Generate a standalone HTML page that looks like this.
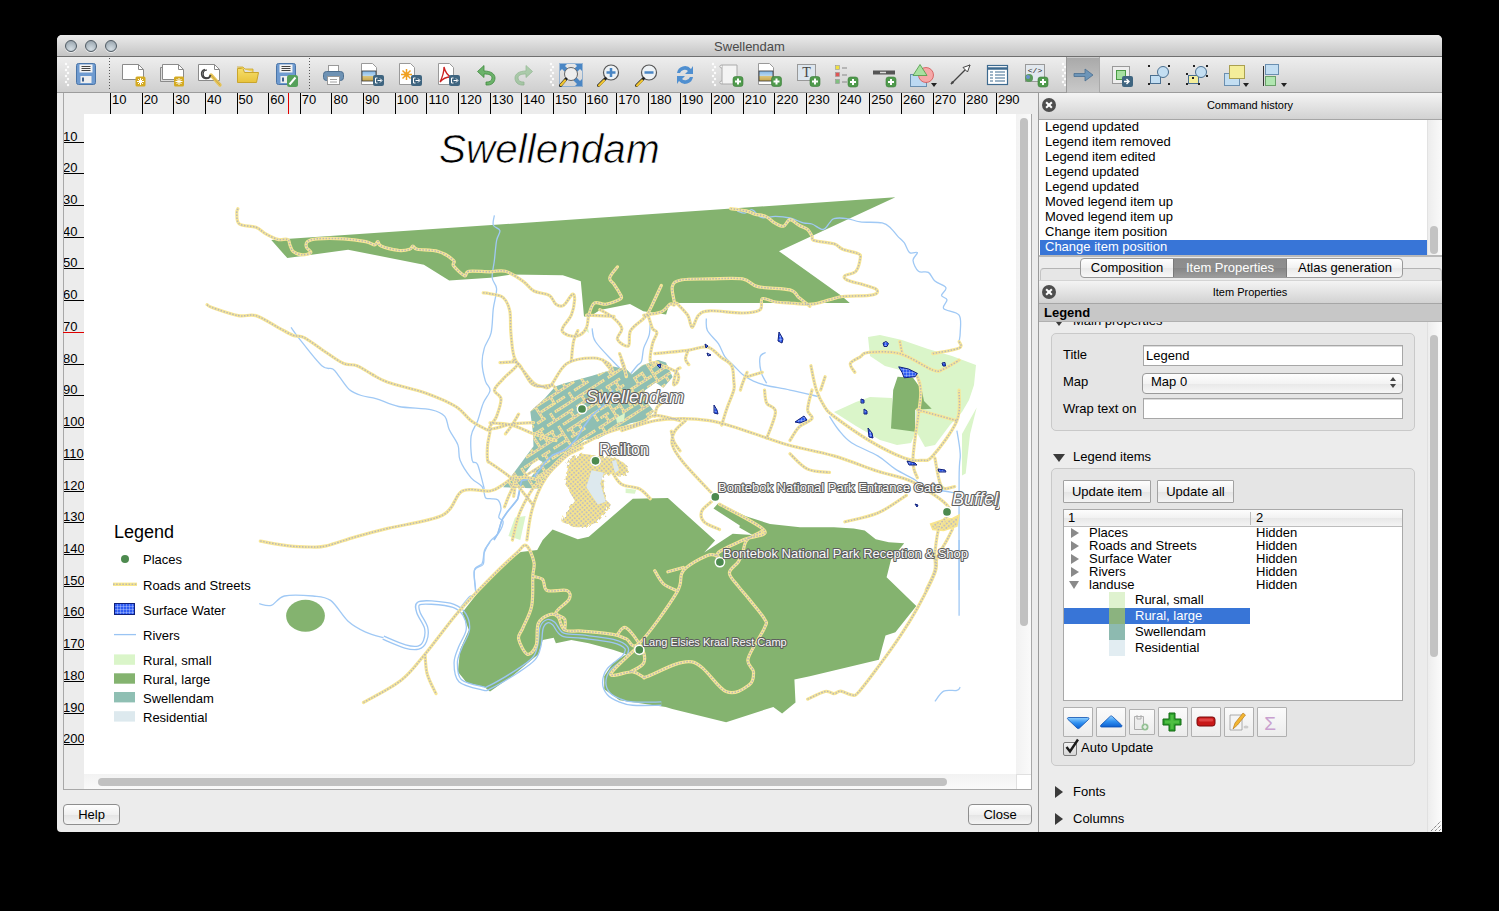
<!DOCTYPE html>
<html><head><meta charset="utf-8">
<style>
*{margin:0;padding:0;box-sizing:border-box}
html,body{width:1499px;height:911px;overflow:hidden;background:#000;font-family:"Liberation Sans",sans-serif;}
.a{position:absolute}
#win{position:absolute;left:57px;top:35px;width:1385px;height:797px;background:#ececec;border-radius:5px 5px 4px 4px;overflow:hidden}
#title{left:0;top:0;width:1385px;height:22px;background:linear-gradient(#ebebeb,#c4c4c4);border-bottom:1px solid #6f6f6f}
#title .t{left:0;width:1385px;top:4px;text-align:center;font-size:13px;color:#4a4a4a}
.light{width:12px;height:12px;border-radius:50%;top:5px;background:radial-gradient(circle at 50% 80%,#d4dde3 0,#b3bec6 50%,#8f9ba4 100%);border:1px solid #4f5a63;box-shadow:0 1px 0 rgba(255,255,255,.6)}
#tb{left:0;top:22px;width:1385px;height:36px;background:linear-gradient(#eeeeee,#cfcfcf);border-bottom:1px solid #9c9c9c}
.ic{position:absolute;width:26px;height:26px}
.sep{position:absolute;top:7px;width:1px;height:28px;border-left:1px dotted #8a8a8a}
.grip{position:absolute;top:10px;width:5px;height:22px;background:repeating-linear-gradient(#fff 0 2px,transparent 2px 4px);opacity:.8}
#rulT{left:6px;top:58px;width:968px;height:21px;background:#ececec;overflow:hidden}
#rulL{left:6px;top:79px;width:21px;height:676px;background:#ececec;overflow:hidden}
.rt{position:absolute;top:0;height:21px;border-left:1px solid #000;font-size:13px;line-height:14px;padding-left:1px;color:#000}
.rl{position:absolute;left:0;width:21px;border-bottom:1px solid #000;font-size:13px;line-height:17px;height:15px;color:#000;white-space:nowrap;overflow:visible}
#canvas{left:27px;top:79px;width:932px;height:660px;background:#fff;overflow:hidden}
.txt{position:absolute;white-space:nowrap}
#dock{left:982px;top:58px;width:403px;height:739px;background:#ececec}
.dh{position:absolute;left:0;width:403px;background:linear-gradient(#f4f4f4,#d2d2d2);border-bottom:1px solid #a6a6a6;font-size:11px;text-align:center;color:#000}
.xbtn{position:absolute;left:3px;width:14px;height:14px;border-radius:50%;background:#4e4e4e}
.xbtn:before,.xbtn:after{content:"";position:absolute;left:6px;top:3px;width:2px;height:8px;background:#fff;transform:rotate(45deg)}
.xbtn:after{transform:rotate(-45deg)}
.li{position:absolute;left:6px;font-size:13px;line-height:13px;height:15px;white-space:nowrap}
.btn{position:absolute;background:linear-gradient(#fefefe,#f0f0f0 50%,#e4e4e4 51%,#f4f4f4);border:1px solid #8e8e8e;border-radius:4px;font-size:13px;text-align:center}
</style></head><body>
<div id="win">
  <div id="title" class="a">
    <div class="a light" style="left:8px"></div>
    <div class="a light" style="left:28px"></div>
    <div class="a light" style="left:48px"></div>
    <div class="a t">Swellendam</div>
  </div>
  <div id="tb" class="a">
  </div>
  <!-- rulers -->
  <div id="rulT" class="a"><div class="rt" style="left:47.00px">10</div><div class="rt" style="left:78.64px">20</div><div class="rt" style="left:110.28px">30</div><div class="rt" style="left:141.92px">40</div><div class="rt" style="left:173.56px">50</div><div class="rt" style="left:205.20px">60</div><div class="rt" style="left:236.84px">70</div><div class="rt" style="left:268.48px">80</div><div class="rt" style="left:300.12px">90</div><div class="rt" style="left:331.76px">100</div><div class="rt" style="left:363.40px">110</div><div class="rt" style="left:395.04px">120</div><div class="rt" style="left:426.68px">130</div><div class="rt" style="left:458.32px">140</div><div class="rt" style="left:489.96px">150</div><div class="rt" style="left:521.60px">160</div><div class="rt" style="left:553.24px">170</div><div class="rt" style="left:584.88px">180</div><div class="rt" style="left:616.52px">190</div><div class="rt" style="left:648.16px">200</div><div class="rt" style="left:679.80px">210</div><div class="rt" style="left:711.44px">220</div><div class="rt" style="left:743.08px">230</div><div class="rt" style="left:774.72px">240</div><div class="rt" style="left:806.36px">250</div><div class="rt" style="left:838.00px">260</div><div class="rt" style="left:869.64px">270</div><div class="rt" style="left:901.28px">280</div><div class="rt" style="left:932.92px">290</div><div class="a" style="left:225px;top:0;width:1px;height:21px;background:#e00000"></div></div>
  <div id="rulL" class="a"><div class="a" style="left:0;top:218px;width:21px;height:1px;background:#e00000;z-index:2"></div><div class="rl" style="top:13.60px">10</div><div class="rl" style="top:45.32px">20</div><div class="rl" style="top:77.04px">30</div><div class="rl" style="top:108.76px">40</div><div class="rl" style="top:140.48px">50</div><div class="rl" style="top:172.20px">60</div><div class="rl" style="top:203.92px">70</div><div class="rl" style="top:235.64px">80</div><div class="rl" style="top:267.36px">90</div><div class="rl" style="top:299.08px">100</div><div class="rl" style="top:330.80px">110</div><div class="rl" style="top:362.52px">120</div><div class="rl" style="top:394.24px">130</div><div class="rl" style="top:425.96px">140</div><div class="rl" style="top:457.68px">150</div><div class="rl" style="top:489.40px">160</div><div class="rl" style="top:521.12px">170</div><div class="rl" style="top:552.84px">180</div><div class="rl" style="top:584.56px">190</div><div class="rl" style="top:616.28px">200</div></div>
  <div class="a" style="left:6px;top:58px;width:1px;height:697px;background:#a8a8a8"></div>
  <div class="a" style="left:6px;top:754px;width:968px;height:1px;background:#a8a8a8"></div><div class="a" style="left:974px;top:79px;width:1px;height:676px;background:#a8a8a8"></div><div class="a" style="left:959px;top:739px;width:15px;height:15px;background:#fff;border-left:1px solid #e0e0e0;border-top:1px solid #e0e0e0"></div>
  <div id="canvas" class="a"></div>
  <!-- scrollbars -->
  <div class="a" style="left:959px;top:79px;width:15px;height:660px;background:linear-gradient(90deg,#f2f2f2,#fafafa)"></div>
  <div class="a" style="left:963px;top:83px;width:8px;height:508px;border-radius:4px;background:#c1c1c1"></div>
  <div class="a" style="left:27px;top:739px;width:932px;height:15px;background:linear-gradient(#f2f2f2,#fafafa)"></div>
  <div class="a" style="left:41px;top:743px;width:849px;height:8px;border-radius:4px;background:#c1c1c1"></div>
  <div class="btn" style="left:6px;top:769px;width:57px;height:21px;line-height:19px">Help</div>
  <div class="btn" style="left:911px;top:769px;width:64px;height:21px;line-height:19px">Close</div>
  <!-- dock -->
  <div class="a" style="left:981px;top:58px;width:1px;height:739px;background:#9a9a9a"></div>
  <div id="dock" class="a">
  </div>
</div>

<!--MAP-->
<svg class="a" style="left:84px;top:114px" width="932" height="660" viewBox="84 114 932 660">
<defs>
<pattern id="townpat" width="7" height="7" patternUnits="userSpaceOnUse" patternTransform="rotate(-38)">
<path d="M0 2h7M2 0v7" stroke="#f5e494" stroke-width="2.8"/>
<path d="M0 2h7M2 0v7" stroke="#bdb8ad" stroke-width="1" stroke-dasharray="1 1.6"/>
</pattern>
<pattern id="railpat" width="3.2" height="3.2" patternUnits="userSpaceOnUse" patternTransform="rotate(-40)">
<rect width="3.2" height="3.2" fill="#f9e68c"/>
<rect x="0.6" y="0.6" width="1.9" height="1.9" fill="#c0bfbf"/>
</pattern>
<pattern id="wpat" width="3" height="3" patternUnits="userSpaceOnUse"><rect width="3" height="3" fill="#2f5cf2"/><path d="M0 0h3M0 0v3" stroke="#d8e4ff" stroke-width="0.7"/></pattern>
<filter id="rough" x="-10%" y="-10%" width="120%" height="120%"><feTurbulence type="fractalNoise" baseFrequency="0.25" numOctaves="2" seed="3"/><feDisplacementMap in="SourceGraphic" scale="6"/></filter>
<clipPath id="tealclip"><path d="M503.2 487.2 L533.5 446.3 L533.0 433.0 L530.3 411.4 L544.8 398.2 L555.3 386.4 L563.2 383.7 L592.2 375.8 L609.4 370.5 L613.3 366.6 L626.5 369.2 L631.8 374.5 L642.3 365.3 L658.1 360.0 L666.0 362.6 L672.6 377.1 L663.4 387.7 L655.5 382.4 L645.0 390.3 L645.0 399.5 L654.2 411.4 L643.6 420.6 L630.4 423.2 L612.0 431.2 L597.5 439.1 L584.8 439.8 L576.9 446.3 L563.8 456.9 L538.7 488.5 L525.0 488.0 Z"/></clipPath>
</defs>
<path d="M271.3 240.1 L620.0 216.3 L895.4 197.2 L779.0 251.2 L841.4 295.7 L849.8 302.9 L669.7 302.9 L666.1 314.4 L643.3 311.3 L630.0 304.0 L600.0 310.0 L590.0 316.6 L584.0 316.6 L580.8 281.3 L562.8 275.3 L510.3 274.6 L490.3 277.7 L449.2 280.5 L423.9 264.7 L348.1 249.7 L287.3 258.1 Z" fill="#84b36f"/>
<path d="M542.7 540.0 L552.6 529.5 L577.8 539.3 L588.8 536.7 L632.8 498.7 L667.9 498.1 L715.1 540.4 L704.2 552.5 L732.7 533.8 L752.5 534.9 L739.3 527.6 L739.8 525.6 L713.5 508.5 L718.4 503.1 L745.9 516.2 L770.0 524.0 L800.0 527.2 L833.9 527.3 L853.7 528.4 L864.7 530.6 L875.7 539.3 L888.8 542.2 L904.2 543.3 L891.0 559.8 L886.6 577.3 L916.3 605.9 L895.4 632.2 L885.5 635.5 L882.2 647.6 L878.9 659.7 L809.8 676.2 L794.4 679.5 L795.5 702.5 L790.0 706.9 L782.1 713.5 L773.3 706.9 L726.1 722.3 L672.3 709.1 L665.7 706.9 L619.6 700.3 L604.2 689.3 L604.2 676.2 L613.0 663.0 L626.2 654.2 L613.0 649.8 L588.8 643.2 L571.3 639.9 L555.9 643.2 L553.7 637.7 L542.7 639.9 L538.3 654.2 L512.0 676.2 L490.0 691.5 L484.3 687.1 L466.7 682.8 L457.9 671.8 L460.1 649.8 L468.9 630.0 L462.3 612.5 L490.0 577.3 L509.8 559.8 L520.7 552.1 L537.2 549.9 Z" fill="#84b36f"/>
<path d="M868.0 337.0 L880.0 335.0 L902.0 340.0 L928.0 349.0 L952.0 356.0 L976.0 365.0 L974.0 385.0 L969.0 400.0 L962.0 412.0 L950.0 425.0 L935.0 445.0 L925.0 447.0 L916.0 431.0 L916.0 410.0 L919.0 378.0 L904.0 371.0 L885.0 366.0 L870.0 356.0 Z" fill="#daf5c9"/>
<path d="M834.0 412.0 L856.0 402.0 L870.0 397.0 L892.0 398.0 L894.0 421.0 L916.0 431.0 L911.0 443.0 L897.0 445.0 L880.0 440.0 L868.0 433.0 L856.0 426.0 Z" fill="#daf5c9"/>
<path d="M976.7 407.6 L962.0 433.9 L962.0 475.6 L965.7 473.5 L970.1 433.9 Z" fill="#daf5c9"/>
<path d="M897.6 376.7 L913.0 377.8 L921.8 390.0 L924.0 401.0 L931.7 408.7 L915.2 409.8 L915.2 431.7 L891.0 428.4 L893.2 390.0 Z" fill="#84b36f"/>
<ellipse cx="305.5" cy="615.8" rx="19.4" ry="16" fill="#84b36f"/>
<path d="M291.0 327.3 C292.5 329.3 294.7 332.9 299.8 339.3 C304.9 345.7 316.3 360.8 321.8 365.7 C327.3 370.6 329.8 367.2 332.8 369.0 C335.7 370.8 336.6 373.3 339.3 376.7 C342.1 380.1 345.6 386.2 349.2 389.4 C352.9 392.5 356.7 393.9 361.3 395.5 C365.9 397.1 370.5 397.0 376.7 398.8 C382.9 400.6 389.5 404.6 398.6 406.5 C407.8 408.3 423.9 408.1 431.6 409.8 C439.3 411.4 441.8 413.1 444.8 416.4 C447.7 419.6 447.0 424.8 449.2 429.5 C451.3 434.3 456.1 439.8 457.9 444.9 C459.8 450.0 457.9 454.8 460.1 460.3 C462.3 465.8 467.5 473.5 471.1 477.8 C474.8 482.2 479.7 483.3 482.1 486.6 C484.5 489.9 484.1 495.6 485.4 497.6 C486.7 499.6 487.9 498.3 490.0 498.7 C492.1 499.1 495.9 498.2 497.7 499.8 C499.5 501.4 500.8 505.7 501.0 508.6 C501.2 511.5 498.4 515.2 498.8 517.4 C499.2 519.6 503.2 519.2 503.2 521.8 C503.2 524.4 501.0 529.5 498.8 532.8 C496.6 536.1 492.4 538.2 490.0 541.5 C487.6 544.8 485.6 548.9 484.3 552.5 C483.0 556.2 483.7 560.6 482.1 563.5 C480.4 566.4 475.5 565.7 474.4 570.1 C473.3 574.5 475.3 586.7 475.5 590.1" fill="none" stroke="#a0c9f5" stroke-width="1.3" stroke-linejoin="round"/>
<path d="M494.4 215.3 C494.2 216.9 492.4 222.6 493.3 225.1 C494.2 227.7 499.3 228.1 499.9 230.6 C500.4 233.2 497.5 235.6 496.6 240.5 C495.7 245.5 495.1 254.1 494.4 260.3 C493.7 266.5 491.8 273.1 492.2 277.8 C492.6 282.6 496.4 283.7 496.6 288.8 C496.8 294.0 494.2 301.3 493.3 308.6 C492.4 315.9 492.6 326.2 491.1 332.8 C489.6 339.3 485.8 343.0 484.3 348.1 C482.8 353.3 481.9 358.0 482.1 363.5 C482.3 369.0 484.1 376.6 485.4 381.1 C486.7 385.6 490.4 386.8 490.0 390.5 C489.6 394.2 485.2 398.1 483.2 403.2 C481.1 408.2 479.7 415.3 477.7 420.7 C475.7 426.2 472.0 429.5 471.1 436.1 C470.2 442.7 471.1 455.5 472.2 460.3 C473.3 465.0 475.7 459.9 477.7 464.7 C479.7 469.4 483.2 484.8 484.3 488.8" fill="none" stroke="#a0c9f5" stroke-width="1.3" stroke-linejoin="round"/>
<path d="M592.1 328.4 C592.7 330.6 591.9 336.0 595.4 341.5 C598.9 347.0 609.0 356.9 613.0 361.3 C617.0 365.7 618.5 366.8 619.6 367.9" fill="none" stroke="#a0c9f5" stroke-width="1.3" stroke-linejoin="round"/>
<path d="M650.3 319.6 C650.1 322.1 650.3 330.2 649.2 334.9 C648.1 339.7 645.0 343.7 643.7 348.1 C642.5 352.5 642.6 358.4 641.5 361.3 C640.4 364.2 639.7 362.8 637.1 365.7 C634.6 368.6 630.2 374.8 626.2 378.9 C622.1 382.9 615.2 388.2 613.0 390.1" fill="none" stroke="#a0c9f5" stroke-width="1.3" stroke-linejoin="round"/>
<path d="M706.3 318.5 C706.5 320.5 705.4 326.3 707.4 330.6 C709.4 334.8 715.5 339.3 718.4 343.7 C721.3 348.1 722.4 353.3 725.0 356.9 C727.6 360.6 730.9 362.8 733.8 365.7 C736.7 368.6 739.3 371.9 742.6 374.5 C745.9 377.0 749.5 379.2 753.5 381.1 C757.6 382.9 760.6 384.0 766.7 385.5 C772.8 387.0 781.4 388.2 790.0 390.1 C798.6 391.9 813.8 395.5 818.6 396.6" fill="none" stroke="#a0c9f5" stroke-width="1.3" stroke-linejoin="round"/>
<path d="M737.1 210.9 C738.4 211.2 742.2 213.2 744.8 213.1 C747.3 212.9 749.7 209.0 752.4 209.8 C755.2 210.5 757.4 216.4 761.2 217.5 C765.1 218.6 770.7 216.3 775.5 216.4 C780.3 216.4 785.4 216.9 790.0 218.0 C794.6 219.1 799.5 221.9 803.2 222.9 C806.8 223.9 808.7 222.9 812.0 224.0 C815.3 225.1 820.0 229.7 822.9 229.5 C825.9 229.3 827.7 224.8 829.5 222.9 C831.4 221.1 831.0 219.3 833.9 218.6 C836.9 217.8 842.7 218.0 847.1 218.6 C851.5 219.1 854.4 221.1 860.3 221.8 C866.1 222.6 877.1 221.8 882.2 222.9 C887.4 224.0 888.5 226.2 891.0 228.4 C893.6 230.6 895.4 233.7 897.6 236.1 C899.8 238.5 902.2 240.0 904.2 242.7 C906.2 245.5 907.5 250.9 909.7 252.6 C911.9 254.2 916.8 251.3 917.4 252.6 C917.9 253.9 912.8 257.2 913.0 260.3 C913.2 263.4 915.9 269.2 918.5 271.3 C921.0 273.3 925.6 270.7 928.4 272.4 C931.1 274.0 932.0 278.6 934.9 281.1 C937.9 283.7 944.8 285.4 945.9 287.7 C947.0 290.1 941.4 293.4 941.5 295.4 C941.7 297.4 946.7 297.6 947.0 299.8 C947.4 302.0 941.7 306.0 943.7 308.6 C945.7 311.2 956.4 311.2 959.1 315.2 C961.9 319.2 960.2 328.4 960.2 332.8 C960.2 337.1 959.3 340.1 959.1 341.5" fill="none" stroke="#a0c9f5" stroke-width="1.3" stroke-linejoin="round"/>
<path d="M765.6 352.5 C764.7 353.3 760.9 353.6 760.1 356.9 C759.4 360.2 760.1 367.9 761.2 372.3 C762.3 376.7 765.8 381.4 766.7 383.3" fill="none" stroke="#a0c9f5" stroke-width="1.3" stroke-linejoin="round"/>
<path d="M829.5 416.4 C831.0 418.6 834.7 425.1 838.3 429.5 C842.0 433.9 844.9 438.3 851.5 442.7 C858.1 447.1 870.5 451.5 877.8 455.9 C885.2 460.3 889.2 465.0 895.4 469.1 C901.6 473.1 910.1 476.8 915.2 480.0 C920.3 483.3 921.4 487.0 926.2 488.8 C930.9 490.7 938.6 490.3 943.7 491.0 C948.9 491.8 954.7 492.9 956.9 493.2" fill="none" stroke="#a0c9f5" stroke-width="1.3" stroke-linejoin="round"/>
<path d="M956.9 430.6 C957.5 434.5 959.8 445.8 960.2 453.7 C960.6 461.6 959.3 455.1 959.1 477.8 C958.9 500.6 959.1 571.4 959.1 590.1" fill="none" stroke="#a0c9f5" stroke-width="1.3" stroke-linejoin="round"/>
<path d="M259.2 603.7 C261.2 604.0 267.1 606.7 271.3 605.4 C275.5 604.2 277.5 597.6 284.4 596.0 C291.4 594.4 305.3 595.3 313.0 596.0 C320.7 596.7 324.7 596.2 330.6 600.4 C336.4 604.6 342.3 616.0 348.1 621.3 C354.0 626.6 359.8 629.5 365.7 632.2 C371.6 635.0 380.3 636.8 383.3 637.7" fill="none" stroke="#a0c9f5" stroke-width="1.3" stroke-linejoin="round"/>
<path d="M490.0 542.2 C489.1 543.7 485.4 547.3 484.3 551.0 C483.2 554.6 484.8 560.9 483.2 564.2 C481.5 567.5 475.7 566.0 474.4 570.7 C473.1 575.5 476.4 588.3 475.5 592.7 C474.6 597.1 471.5 594.5 468.9 597.1 C466.4 599.7 461.6 606.3 460.1 608.1" fill="none" stroke="#a0c9f5" stroke-width="1.3" stroke-linejoin="round"/>
<path d="M959.1 540.0 L959.1 615.8" fill="none" stroke="#a0c9f5" stroke-width="1.3" stroke-linejoin="round"/>
<path d="M934.9 701.4 C936.4 699.7 940.1 692.9 943.7 691.1 C947.4 689.3 954.2 691.1 956.9 690.4 C959.7 689.8 959.7 687.7 960.2 687.1" fill="none" stroke="#a0c9f5" stroke-width="1.3" stroke-linejoin="round"/>
<path d="M613.0 390.0 C611.7 392.2 608.9 399.3 605.4 403.5 C601.9 407.7 595.7 411.6 592.2 415.3 C588.7 419.0 586.9 421.9 584.3 425.9 C581.7 429.9 579.5 435.2 576.4 439.1 C573.3 443.1 569.8 447.0 565.9 449.6 C562.0 452.2 556.1 452.8 552.7 454.9 C549.3 457.0 548.5 458.2 545.3 462.1 C542.1 466.0 537.5 474.9 533.5 478.0 C529.5 481.1 523.8 479.3 521.6 480.6 C519.4 481.9 520.9 482.8 520.3 485.9 C519.6 489.0 519.9 494.6 517.7 499.0 C515.5 503.4 509.7 508.7 507.1 512.2 C504.5 515.7 503.4 516.6 501.9 520.1 C500.4 523.6 499.2 530.0 497.9 533.3 C496.6 536.6 494.6 538.9 494.0 540.0" fill="none" stroke="#a0c9f5" stroke-width="1.3" stroke-linejoin="round"/>
<mask id="rmask" maskUnits="userSpaceOnUse" x="84" y="114" width="932" height="660"><path d="M383.3 637.7 C386.9 639.2 399.4 644.9 405.2 646.5 C411.1 648.2 415.1 648.5 418.4 647.6 C421.7 646.7 423.7 644.3 425.0 641.0 C426.3 637.7 427.2 632.6 426.1 627.8 C425.0 623.1 419.7 616.5 418.4 612.5 C417.1 608.4 416.2 605.3 418.4 603.7 C420.6 602.0 425.7 602.2 431.6 602.6 C437.4 603.0 448.1 603.9 453.5 605.9 C459.0 607.9 462.1 610.6 464.5 614.7 C466.9 618.7 468.6 624.6 467.8 630.0 C467.1 635.5 462.1 642.1 460.1 647.6 C458.1 653.1 455.7 657.5 455.7 663.0 C455.7 668.5 455.7 676.3 460.1 680.6 C464.5 684.8 477.1 687.1 482.1 688.2 C487.1 689.3 484.3 689.9 490.0 687.1 C495.7 684.4 509.0 676.5 516.4 671.8 C523.7 667.0 530.1 663.0 533.9 658.6 C537.8 654.2 538.1 650.5 539.4 645.4 C540.7 640.3 540.3 631.9 541.6 627.8 C542.9 623.8 545.1 622.0 547.1 621.3 C549.1 620.5 551.1 621.3 553.7 623.5 C556.3 625.7 557.7 632.2 562.5 634.4 C567.2 636.6 573.8 635.5 582.2 636.6 C590.7 637.7 605.7 639.2 613.0 641.0 C620.3 642.9 624.3 645.1 626.2 647.6 C628.0 650.2 626.9 652.7 624.0 656.4 C621.0 660.1 611.9 665.2 608.6 669.6 C605.3 674.0 604.2 678.7 604.2 682.8 C604.2 686.8 606.0 690.8 608.6 693.7 C611.2 696.7 615.5 698.7 619.6 700.3 C623.6 702.0 625.8 703.1 632.8 703.6 C639.7 704.2 656.5 703.6 661.3 703.6" fill="none" stroke="#fff" stroke-width="4.6" stroke-linejoin="round"/><path d="M383.3 637.7 C386.9 639.2 399.4 644.9 405.2 646.5 C411.1 648.2 415.1 648.5 418.4 647.6 C421.7 646.7 423.7 644.3 425.0 641.0 C426.3 637.7 427.2 632.6 426.1 627.8 C425.0 623.1 419.7 616.5 418.4 612.5 C417.1 608.4 416.2 605.3 418.4 603.7 C420.6 602.0 425.7 602.2 431.6 602.6 C437.4 603.0 448.1 603.9 453.5 605.9 C459.0 607.9 462.1 610.6 464.5 614.7 C466.9 618.7 468.6 624.6 467.8 630.0 C467.1 635.5 462.1 642.1 460.1 647.6 C458.1 653.1 455.7 657.5 455.7 663.0 C455.7 668.5 455.7 676.3 460.1 680.6 C464.5 684.8 477.1 687.1 482.1 688.2 C487.1 689.3 484.3 689.9 490.0 687.1 C495.7 684.4 509.0 676.5 516.4 671.8 C523.7 667.0 530.1 663.0 533.9 658.6 C537.8 654.2 538.1 650.5 539.4 645.4 C540.7 640.3 540.3 631.9 541.6 627.8 C542.9 623.8 545.1 622.0 547.1 621.3 C549.1 620.5 551.1 621.3 553.7 623.5 C556.3 625.7 557.7 632.2 562.5 634.4 C567.2 636.6 573.8 635.5 582.2 636.6 C590.7 637.7 605.7 639.2 613.0 641.0 C620.3 642.9 624.3 645.1 626.2 647.6 C628.0 650.2 626.9 652.7 624.0 656.4 C621.0 660.1 611.9 665.2 608.6 669.6 C605.3 674.0 604.2 678.7 604.2 682.8 C604.2 686.8 606.0 690.8 608.6 693.7 C611.2 696.7 615.5 698.7 619.6 700.3 C623.6 702.0 625.8 703.1 632.8 703.6 C639.7 704.2 656.5 703.6 661.3 703.6" fill="none" stroke="#000" stroke-width="2.0" stroke-linejoin="round"/></mask>
<rect x="84" y="114" width="932" height="660" fill="#9cc6f4" mask="url(#rmask)"/>
<path d="M503.2 487.2 L533.5 446.3 L533.0 433.0 L530.3 411.4 L544.8 398.2 L555.3 386.4 L563.2 383.7 L592.2 375.8 L609.4 370.5 L613.3 366.6 L626.5 369.2 L631.8 374.5 L642.3 365.3 L658.1 360.0 L666.0 362.6 L672.6 377.1 L663.4 387.7 L655.5 382.4 L645.0 390.3 L645.0 399.5 L654.2 411.4 L643.6 420.6 L630.4 423.2 L612.0 431.2 L597.5 439.1 L584.8 439.8 L576.9 446.3 L563.8 456.9 L538.7 488.5 L525.0 488.0 Z" fill="#8fbfb3"/>
<path d="M521.6 477.9 L536.1 458.2 L542.7 462.1 L529.5 479.3 Z" fill="#fff"/>
<g clip-path="url(#tealclip)"><path d="M458.8 402.9L464.7 399.1M464.7 399.1L470.5 395.3M476.4 391.5L482.3 387.6M482.3 387.6L488.1 383.8M488.1 383.8L494.0 380.0M494.0 380.0L499.9 376.2M499.9 376.2L505.8 372.4M505.8 372.4L511.6 368.6M511.6 368.6L517.5 364.8M517.5 364.8L523.4 361.0M523.4 361.0L529.2 357.1M529.2 357.1L535.1 353.3M541.0 349.5L546.9 345.7M546.9 345.7L552.7 341.9M564.5 334.3L570.3 330.5M570.3 330.5L576.2 326.6M582.1 322.8L587.9 319.0M593.8 315.2L599.7 311.4M599.7 311.4L605.6 307.6M605.6 307.6L611.4 303.8M611.4 303.8L617.3 300.0M462.9 409.2L468.7 405.4M468.7 405.4L474.6 401.6M480.5 397.7L486.4 393.9M486.4 393.9L492.2 390.1M492.2 390.1L498.1 386.3M498.1 386.3L504.0 382.5M504.0 382.5L509.8 378.7M515.7 374.9L521.6 371.1M521.6 371.1L527.5 367.2M527.5 367.2L533.3 363.4M533.3 363.4L539.2 359.6M539.2 359.6L545.1 355.8M556.8 348.2L562.7 344.4M562.7 344.4L568.6 340.6M568.6 340.6L574.4 336.7M586.2 329.1L592.0 325.3M597.9 321.5L603.8 317.7M603.8 317.7L609.6 313.9M615.5 310.1L621.4 306.2M621.4 306.2L627.3 302.4M467.0 415.5L472.8 411.7M484.6 404.0L490.4 400.2M496.3 396.4L502.2 392.6M508.1 388.8L513.9 385.0M513.9 385.0L519.8 381.2M519.8 381.2L525.7 377.3M537.4 369.7L543.3 365.9M549.2 362.1L555.0 358.3M578.5 343.0L584.4 339.2M584.4 339.2L590.2 335.4M596.1 331.6L602.0 327.8M602.0 327.8L607.9 324.0M607.9 324.0L613.7 320.2M613.7 320.2L619.6 316.4M619.6 316.4L625.5 312.5M471.0 421.8L476.9 418.0M476.9 418.0L482.8 414.1M482.8 414.1L488.7 410.3M494.5 406.5L500.4 402.7M500.4 402.7L506.3 398.9M506.3 398.9L512.1 395.1M529.8 383.6L535.6 379.8M535.6 379.8L541.5 376.0M541.5 376.0L547.4 372.2M559.1 364.6L565.0 360.8M565.0 360.8L570.8 357.0M570.8 357.0L576.7 353.1M576.7 353.1L582.6 349.3M582.6 349.3L588.5 345.5M588.5 345.5L594.3 341.7M594.3 341.7L600.2 337.9M600.2 337.9L606.1 334.1M606.1 334.1L611.9 330.3M611.9 330.3L617.8 326.5M617.8 326.5L623.7 322.6M475.1 428.1L481.0 424.2M481.0 424.2L486.9 420.4M492.7 416.6L498.6 412.8M522.1 397.6L528.0 393.7M528.0 393.7L533.8 389.9M533.8 389.9L539.7 386.1M545.6 382.3L551.5 378.5M551.5 378.5L557.3 374.7M557.3 374.7L563.2 370.9M563.2 370.9L569.1 367.1M569.1 367.1L574.9 363.2M574.9 363.2L580.8 359.4M580.8 359.4L586.7 355.6M586.7 355.6L592.5 351.8M592.5 351.8L598.4 348.0M598.4 348.0L604.3 344.2M604.3 344.2L610.2 340.4M616.0 336.6L621.9 332.7M621.9 332.7L627.8 328.9M627.8 328.9L633.6 325.1M633.6 325.1L639.5 321.3M479.2 434.3L485.1 430.5M485.1 430.5L491.0 426.7M502.7 419.1L508.6 415.3M508.6 415.3L514.4 411.5M514.4 411.5L520.3 407.7M520.3 407.7L526.2 403.8M526.2 403.8L532.1 400.0M532.1 400.0L537.9 396.2M543.8 392.4L549.7 388.6M549.7 388.6L555.5 384.8M561.4 381.0L567.3 377.2M567.3 377.2L573.1 373.3M573.1 373.3L579.0 369.5M579.0 369.5L584.9 365.7M584.9 365.7L590.8 361.9M608.4 350.5L614.2 346.7M614.2 346.7L620.1 342.8M620.1 342.8L626.0 339.0M631.9 335.2L637.7 331.4M483.3 440.6L489.2 436.8M489.2 436.8L495.0 433.0M530.3 410.1L536.1 406.3M536.1 406.3L542.0 402.5M542.0 402.5L547.9 398.7M547.9 398.7L553.7 394.9M553.7 394.9L559.6 391.1M559.6 391.1L565.5 387.3M565.5 387.3L571.4 383.4M583.1 375.8L589.0 372.0M606.6 360.6L612.5 356.8M612.5 356.8L618.3 352.9M618.3 352.9L624.2 349.1M624.2 349.1L630.1 345.3M630.1 345.3L635.9 341.5M493.3 443.1L499.1 439.3M510.9 431.7L516.7 427.9M540.2 412.6L546.1 408.8M546.1 408.8L552.0 405.0M557.8 401.2L563.7 397.4M575.4 389.7L581.3 385.9M581.3 385.9L587.2 382.1M598.9 374.5L604.8 370.7M604.8 370.7L610.7 366.9M610.7 366.9L616.5 363.1M628.3 355.4L634.2 351.6M491.5 453.2L497.3 449.4M497.3 449.4L503.2 445.6M503.2 445.6L509.1 441.8M509.1 441.8L515.0 438.0M526.7 430.3L532.6 426.5M538.4 422.7L544.3 418.9M556.0 411.3L561.9 407.5M561.9 407.5L567.8 403.7M567.8 403.7L573.7 399.8M573.7 399.8L579.5 396.0M579.5 396.0L585.4 392.2M585.4 392.2L591.3 388.4M591.3 388.4L597.1 384.6M597.1 384.6L603.0 380.8M608.9 377.0L614.8 373.2M614.8 373.2L620.6 369.3M620.6 369.3L626.5 365.5M632.4 361.7L638.2 357.9M644.1 354.1L650.0 350.3M650.0 350.3L655.9 346.5M495.6 459.5L501.4 455.7M501.4 455.7L507.3 451.9M507.3 451.9L513.2 448.1M513.2 448.1L519.0 444.3M519.0 444.3L524.9 440.4M530.8 436.6L536.7 432.8M536.7 432.8L542.5 429.0M548.4 425.2L554.3 421.4M554.3 421.4L560.1 417.6M560.1 417.6L566.0 413.8M566.0 413.8L571.9 409.9M577.7 406.1L583.6 402.3M583.6 402.3L589.5 398.5M589.5 398.5L595.4 394.7M595.4 394.7L601.2 390.9M607.1 387.1L613.0 383.3M613.0 383.3L618.8 379.4M630.6 371.8L636.5 368.0M636.5 368.0L642.3 364.2M642.3 364.2L648.2 360.4M648.2 360.4L654.1 356.6M499.6 465.8L505.5 462.0M505.5 462.0L511.4 458.2M511.4 458.2L517.3 454.4M540.7 439.1L546.6 435.3M546.6 435.3L552.5 431.5M564.2 423.9L570.1 420.0M570.1 420.0L576.0 416.2M576.0 416.2L581.8 412.4M581.8 412.4L587.7 408.6M587.7 408.6L593.6 404.8M593.6 404.8L599.4 401.0M617.1 389.5L622.9 385.7M634.7 378.1L640.5 374.3M652.3 366.7L658.1 362.9M503.7 472.1L509.6 468.3M509.6 468.3L515.5 464.5M527.2 456.8L533.1 453.0M533.1 453.0L538.9 449.2M538.9 449.2L544.8 445.4M544.8 445.4L550.7 441.6M550.7 441.6L556.6 437.8M556.6 437.8L562.4 434.0M568.3 430.1L574.2 426.3M574.2 426.3L580.0 422.5M580.0 422.5L585.9 418.7M585.9 418.7L591.8 414.9M591.8 414.9L597.7 411.1M603.5 407.3L609.4 403.5M609.4 403.5L615.3 399.6M632.9 388.2L638.8 384.4M638.8 384.4L644.6 380.6M644.6 380.6L650.5 376.8M656.4 373.0L662.2 369.1M662.2 369.1L668.1 365.3M507.8 478.4L513.7 474.6M525.4 466.9L531.3 463.1M531.3 463.1L537.2 459.3M543.0 455.5L548.9 451.7M554.8 447.9L560.6 444.1M560.6 444.1L566.5 440.2M572.4 436.4L578.3 432.6M578.3 432.6L584.1 428.8M601.7 417.4L607.6 413.6M613.5 409.8L619.4 405.9M625.2 402.1L631.1 398.3M631.1 398.3L637.0 394.5M637.0 394.5L642.8 390.7M648.7 386.9L654.6 383.1M654.6 383.1L660.4 379.3M660.4 379.3L666.3 375.4M666.3 375.4L672.2 371.6M511.9 484.7L517.8 480.9M517.8 480.9L523.6 477.0M523.6 477.0L529.5 473.2M529.5 473.2L535.4 469.4M535.4 469.4L541.2 465.6M541.2 465.6L547.1 461.8M553.0 458.0L558.9 454.2M558.9 454.2L564.7 450.4M564.7 450.4L570.6 446.5M570.6 446.5L576.5 442.7M576.5 442.7L582.3 438.9M582.3 438.9L588.2 435.1M588.2 435.1L594.1 431.3M600.0 427.5L605.8 423.7M605.8 423.7L611.7 419.9M611.7 419.9L617.6 416.0M623.4 412.2L629.3 408.4M635.2 404.6L641.1 400.8M641.1 400.8L646.9 397.0M652.8 393.2L658.7 389.4M658.7 389.4L664.5 385.5M516.0 491.0L521.9 487.1M539.5 475.7L545.3 471.9M545.3 471.9L551.2 468.1M551.2 468.1L557.1 464.3M557.1 464.3L562.9 460.5M562.9 460.5L568.8 456.6M574.7 452.8L580.6 449.0M580.6 449.0L586.4 445.2M586.4 445.2L592.3 441.4M609.9 430.0L615.8 426.1M615.8 426.1L621.7 422.3M621.7 422.3L627.5 418.5M627.5 418.5L633.4 414.7M633.4 414.7L639.3 410.9M639.3 410.9L645.1 407.1M645.1 407.1L651.0 403.3M662.7 395.6L668.6 391.8M668.6 391.8L674.5 388.0M520.1 497.2L525.9 493.4M525.9 493.4L531.8 489.6M531.8 489.6L537.7 485.8M537.7 485.8L543.5 482.0M543.5 482.0L549.4 478.2M549.4 478.2L555.3 474.4M555.3 474.4L561.2 470.6M561.2 470.6L567.0 466.7M567.0 466.7L572.9 462.9M572.9 462.9L578.8 459.1M578.8 459.1L584.6 455.3M584.6 455.3L590.5 451.5M590.5 451.5L596.4 447.7M596.4 447.7L602.3 443.9M602.3 443.9L608.1 440.1M608.1 440.1L614.0 436.2M614.0 436.2L619.9 432.4M619.9 432.4L625.7 428.6M649.2 413.4L655.1 409.6M655.1 409.6L661.0 405.7M666.8 401.9L672.7 398.1M524.1 503.5L530.0 499.7M559.4 480.7L565.2 476.8M565.2 476.8L571.1 473.0M571.1 473.0L577.0 469.2M594.6 457.8L600.5 454.0M618.1 442.5L624.0 438.7M624.0 438.7L629.8 434.9M629.8 434.9L635.7 431.1M635.7 431.1L641.6 427.3M641.6 427.3L647.4 423.5M653.3 419.7L659.2 415.8M676.8 404.4L682.7 400.6M682.7 400.6L688.5 396.8M540.0 502.2L545.8 498.4M545.8 498.4L551.7 494.6M557.6 490.8L563.5 486.9M569.3 483.1L575.2 479.3M575.2 479.3L581.1 475.5M581.1 475.5L586.9 471.7M592.8 467.9L598.7 464.1M610.4 456.5L616.3 452.6M616.3 452.6L622.2 448.8M622.2 448.8L628.0 445.0M639.8 437.4L645.6 433.6M651.5 429.8L657.4 426.0M657.4 426.0L663.3 422.1M663.3 422.1L669.1 418.3M675.0 414.5L680.9 410.7M680.9 410.7L686.7 406.9M686.7 406.9L692.6 403.1M532.3 516.1L538.2 512.3M538.2 512.3L544.1 508.5M561.7 497.1L567.5 493.2M567.5 493.2L573.4 489.4M573.4 489.4L579.3 485.6M579.3 485.6L585.2 481.8M585.2 481.8L591.0 478.0M596.9 474.2L602.8 470.4M614.5 462.7L620.4 458.9M620.4 458.9L626.3 455.1M638.0 447.5L643.9 443.7M643.9 443.7L649.7 439.9M649.7 439.9L655.6 436.1M661.5 432.2L667.3 428.4M667.3 428.4L673.2 424.6M673.2 424.6L679.1 420.8M679.1 420.8L685.0 417.0M690.8 413.2L696.7 409.4M542.3 518.6L548.1 514.8M559.9 507.2L565.8 503.3M571.6 499.5L577.5 495.7M577.5 495.7L583.4 491.9M583.4 491.9L589.2 488.1M589.2 488.1L595.1 484.3M595.1 484.3L601.0 480.5M601.0 480.5L606.9 476.7M606.9 476.7L612.7 472.8M612.7 472.8L618.6 469.0M618.6 469.0L624.5 465.2M630.3 461.4L636.2 457.6M647.9 450.0L653.8 446.2M671.4 434.7L677.3 430.9M677.3 430.9L683.2 427.1M683.2 427.1L689.0 423.3M694.9 419.5L700.8 415.7M540.5 528.7L546.4 524.9M546.4 524.9L552.2 521.1M552.2 521.1L558.1 517.3M558.1 517.3L564.0 513.4M564.0 513.4L569.8 509.6M575.7 505.8L581.6 502.0M587.5 498.2L593.3 494.4M593.3 494.4L599.2 490.6M599.2 490.6L605.1 486.8M605.1 486.8L610.9 482.9M610.9 482.9L616.8 479.1M652.0 456.3L657.9 452.4M663.8 448.6L669.6 444.8M675.5 441.0L681.4 437.2M693.1 429.6L699.0 425.8M699.0 425.8L704.9 421.9M550.4 531.2L556.3 527.4M556.3 527.4L562.2 523.5M562.2 523.5L568.1 519.7M568.1 519.7L573.9 515.9M585.7 508.3L591.5 504.5M597.4 500.7L603.3 496.9M603.3 496.9L609.2 493.0M609.2 493.0L615.0 489.2M615.0 489.2L620.9 485.4M620.9 485.4L626.8 481.6M626.8 481.6L632.6 477.8M638.5 474.0L644.4 470.2M644.4 470.2L650.2 466.4M662.0 458.7L667.9 454.9M667.9 454.9L673.7 451.1M673.7 451.1L679.6 447.3M679.6 447.3L685.5 443.5M685.5 443.5L691.3 439.7M691.3 439.7L697.2 435.9M697.2 435.9L703.1 432.0M703.1 432.0L709.0 428.2M548.7 541.3L554.5 537.5M566.3 529.8L572.1 526.0M572.1 526.0L578.0 522.2M578.0 522.2L583.9 518.4M583.9 518.4L589.8 514.6M589.8 514.6L595.6 510.8M595.6 510.8L601.5 507.0M601.5 507.0L607.4 503.2M613.2 499.3L619.1 495.5M619.1 495.5L625.0 491.7M636.7 484.1L642.6 480.3M642.6 480.3L648.5 476.5M648.5 476.5L654.3 472.7M654.3 472.7L660.2 468.8M660.2 468.8L666.1 465.0M683.7 453.6L689.6 449.8M689.6 449.8L695.4 446.0M707.2 438.3L713.0 434.5M552.7 547.6L558.6 543.8M558.6 543.8L564.5 539.9M564.5 539.9L570.4 536.1M593.8 520.9L599.7 517.1M599.7 517.1L605.6 513.3M605.6 513.3L611.4 509.4M611.4 509.4L617.3 505.6M646.7 486.6L652.5 482.8M652.5 482.8L658.4 478.9M658.4 478.9L664.3 475.1M670.2 471.3L676.0 467.5M687.8 459.9L693.6 456.1M693.6 456.1L699.5 452.3M699.5 452.3L705.4 448.4M556.8 553.9L562.7 550.0M562.7 550.0L568.6 546.2M568.6 546.2L574.4 542.4M574.4 542.4L580.3 538.6M580.3 538.6L586.2 534.8M586.2 534.8L592.1 531.0M592.1 531.0L597.9 527.2M597.9 527.2L603.8 523.4M603.8 523.4L609.7 519.5M609.7 519.5L615.5 515.7M633.1 504.3L639.0 500.5M639.0 500.5L644.9 496.7M644.9 496.7L650.8 492.9M662.5 485.2L668.4 481.4M668.4 481.4L674.2 477.6M674.2 477.6L680.1 473.8M686.0 470.0L691.9 466.2M691.9 466.2L697.7 462.4M709.5 454.7L715.3 450.9M715.3 450.9L721.2 447.1M435.3 418.1L439.4 424.4M439.4 424.4L443.5 430.7M447.6 437.0L451.6 443.3M463.9 462.2L468.0 468.5M472.1 474.8L476.2 481.0M480.2 487.3L484.3 493.6M484.3 493.6L488.4 499.9M492.5 506.2L496.6 512.5M504.8 525.1L508.8 531.4M508.8 531.4L512.9 537.7M512.9 537.7L517.0 543.9M525.2 556.5L529.3 562.8M529.3 562.8L533.3 569.1M533.3 569.1L537.4 575.4M446.9 419.5L451.0 425.8M451.0 425.8L455.1 432.1M455.1 432.1L459.2 438.4M459.2 438.4L463.3 444.7M483.7 476.1L487.8 482.4M487.8 482.4L491.9 488.7M500.0 501.3L504.1 507.6M508.2 513.9L512.3 520.2M512.3 520.2L516.4 526.5M516.4 526.5L520.5 532.8M520.5 532.8L524.6 539.0M524.6 539.0L528.6 545.3M528.6 545.3L532.7 551.6M532.7 551.6L536.8 557.9M540.9 564.2L545.0 570.5M454.5 414.6L458.6 420.9M458.6 420.9L462.7 427.2M470.8 439.8L474.9 446.1M474.9 446.1L479.0 452.4M483.1 458.7L487.2 465.0M491.3 471.2L495.3 477.5M495.3 477.5L499.4 483.8M503.5 490.1L507.6 496.4M507.6 496.4L511.7 502.7M519.8 515.3L523.9 521.6M523.9 521.6L528.0 527.9M528.0 527.9L532.1 534.1M536.2 540.4L540.3 546.7M548.4 559.3L552.5 565.6M458.0 403.4L462.0 409.7M470.2 422.3L474.3 428.6M478.4 434.9L482.5 441.2M482.5 441.2L486.5 447.5M486.5 447.5L490.6 453.8M507.0 478.9L511.1 485.2M511.1 485.2L515.1 491.5M527.4 510.4L531.5 516.7M531.5 516.7L535.6 522.9M535.6 522.9L539.6 529.2M547.8 541.8L551.9 548.1M477.8 417.4L481.8 423.7M481.8 423.7L485.9 430.0M485.9 430.0L490.0 436.3M494.1 442.6L498.2 448.9M498.2 448.9L502.3 455.1M506.4 461.4L510.4 467.7M510.4 467.7L514.5 474.0M514.5 474.0L518.6 480.3M522.7 486.6L526.8 492.9M539.0 511.8L543.1 518.0M543.1 518.0L547.2 524.3M547.2 524.3L551.3 530.6M559.5 543.2L563.5 549.5M563.5 549.5L567.6 555.8M473.1 393.6L477.1 399.9M497.6 431.4L501.6 437.7M505.7 444.0L509.8 450.2M513.9 456.5L518.0 462.8M522.1 469.1L526.2 475.4M526.2 475.4L530.2 481.7M530.2 481.7L534.3 488.0M534.3 488.0L538.4 494.3M546.6 506.9L550.7 513.1M550.7 513.1L554.7 519.4M562.9 532.0L567.0 538.3M484.7 395.0L488.8 401.3M505.1 426.5L509.2 432.8M509.2 432.8L513.3 439.1M513.3 439.1L517.4 445.3M517.4 445.3L521.4 451.6M533.7 470.5L537.8 476.8M541.9 483.1L546.0 489.4M546.0 489.4L550.0 495.7M558.2 508.2L562.3 514.5M570.5 527.1L574.5 533.4M574.5 533.4L578.6 539.7M578.6 539.7L582.7 546.0M488.1 383.8L492.2 390.1M492.2 390.1L496.3 396.4M504.5 409.0L508.6 415.3M508.6 415.3L512.7 421.6M512.7 421.6L516.7 427.9M520.8 434.2L524.9 440.4M524.9 440.4L529.0 446.7M529.0 446.7L533.1 453.0M541.2 465.6L545.3 471.9M545.3 471.9L549.4 478.2M549.4 478.2L553.5 484.5M561.7 497.1L565.8 503.3M565.8 503.3L569.8 509.6M573.9 515.9L578.0 522.2M578.0 522.2L582.1 528.5M582.1 528.5L586.2 534.8M495.7 378.9L499.8 385.2M503.9 391.5L507.9 397.8M507.9 397.8L512.0 404.1M520.2 416.7L524.3 423.0M524.3 423.0L528.4 429.3M532.5 435.5L536.5 441.8M536.5 441.8L540.6 448.1M544.7 454.4L548.8 460.7M552.9 467.0L557.0 473.3M565.1 485.9L569.2 492.2M569.2 492.2L573.3 498.4M585.6 517.3L589.6 523.6M593.7 529.9L597.8 536.2M507.3 380.3L511.4 386.6M511.4 386.6L515.5 392.9M523.7 405.5L527.8 411.8M540.0 430.6L544.1 436.9M544.1 436.9L548.2 443.2M560.4 462.1L564.5 468.4M568.6 474.7L572.7 481.0M584.9 499.8L589.0 506.1M593.1 512.4L597.2 518.7M597.2 518.7L601.3 525.0M514.9 375.4L519.0 381.7M519.0 381.7L523.0 388.0M523.0 388.0L527.1 394.3M531.2 400.6L535.3 406.9M535.3 406.9L539.4 413.2M539.4 413.2L543.5 419.4M551.6 432.0L555.7 438.3M563.9 450.9L568.0 457.2M572.1 463.5L576.1 469.8M588.4 488.6L592.5 494.9M592.5 494.9L596.6 501.2M600.7 507.5L604.7 513.8M608.8 520.1L612.9 526.4M518.3 364.2L522.4 370.5M522.4 370.5L526.5 376.8M534.7 389.4L538.8 395.7M551.0 414.5L555.1 420.8M559.2 427.1L563.3 433.4M563.3 433.4L567.4 439.7M567.4 439.7L571.4 446.0M571.4 446.0L575.5 452.3M575.5 452.3L579.6 458.6M583.7 464.9L587.8 471.2M591.9 477.4L595.9 483.7M608.2 502.6L612.3 508.9M616.4 515.2L620.5 521.5M530.0 365.6L534.1 371.9M550.4 397.1L554.5 403.4M570.8 428.5L574.9 434.8M583.1 447.4L587.2 453.7M587.2 453.7L591.2 460.0M595.3 466.3L599.4 472.5M603.5 478.8L607.6 485.1M611.7 491.4L615.8 497.7M623.9 510.3L628.0 516.6M533.4 354.4L537.5 360.7M541.6 367.0L545.7 373.3M545.7 373.3L549.8 379.6M549.8 379.6L553.9 385.9M553.9 385.9L557.9 392.2M570.2 411.0L574.3 417.3M578.4 423.6L582.5 429.9M590.6 442.5L594.7 448.8M611.0 473.9L615.1 480.2M623.3 492.8L627.4 499.1M631.5 505.4L635.6 511.7M549.2 362.1L553.2 368.4M557.3 374.7L561.4 381.0M561.4 381.0L565.5 387.3M569.6 393.5L573.7 399.8M577.7 406.1L581.8 412.4M598.2 437.6L602.3 443.9M602.3 443.9L606.3 450.2M606.3 450.2L610.4 456.5M610.4 456.5L614.5 462.7M618.6 469.0L622.7 475.3M630.8 487.9L634.9 494.2M634.9 494.2L639.0 500.5M548.5 344.6L552.6 350.9M552.6 350.9L556.7 357.2M556.7 357.2L560.8 363.5M560.8 363.5L564.9 369.8M564.9 369.8L569.0 376.1M569.0 376.1L573.0 382.4M581.2 394.9L585.3 401.2M593.5 413.8L597.5 420.1M601.6 426.4L605.7 432.7M605.7 432.7L609.8 439.0M609.8 439.0L613.9 445.3M626.1 464.1L630.2 470.4M630.2 470.4L634.3 476.7M634.3 476.7L638.4 483.0M646.6 495.6L650.7 501.9M560.2 346.0L564.2 352.3M572.4 364.9L576.5 371.2M580.6 377.5L584.7 383.7M588.8 390.0L592.8 396.3M592.8 396.3L596.9 402.6M596.9 402.6L601.0 408.9M605.1 415.2L609.2 421.5M617.4 434.1L621.4 440.4M621.4 440.4L625.5 446.6M641.9 471.8L645.9 478.1M645.9 478.1L650.0 484.4M650.0 484.4L654.1 490.7M654.1 490.7L658.2 497.0M575.9 353.7L580.0 360.0M600.4 391.4L604.5 397.7M604.5 397.7L608.6 404.0M608.6 404.0L612.6 410.3M612.6 410.3L616.7 416.6M616.7 416.6L620.8 422.9M637.2 448.0L641.2 454.3M645.3 460.6L649.4 466.9M657.6 479.5L661.7 485.8M575.3 336.2L579.3 342.5M583.4 348.8L587.5 355.1M587.5 355.1L591.6 361.4M591.6 361.4L595.7 367.7M607.9 386.5L612.0 392.8M616.1 399.1L620.2 405.4M620.2 405.4L624.3 411.7M661.0 468.3L665.1 474.6M578.7 325.0L582.8 331.3M582.8 331.3L586.9 337.6M591.0 343.9L595.1 350.2M599.1 356.5L603.2 362.8M603.2 362.8L607.3 369.0M607.3 369.0L611.4 375.3M615.5 381.6L619.6 387.9M619.6 387.9L623.7 394.2M623.7 394.2L627.7 400.5M627.7 400.5L631.8 406.8M648.2 431.9L652.2 438.2M656.3 444.5L660.4 450.8M672.7 469.7L676.8 476.0M594.4 332.7L598.5 339.0M598.5 339.0L602.6 345.3M602.6 345.3L606.7 351.6M606.7 351.6L610.8 357.8M631.2 389.3L635.3 395.6M635.3 395.6L639.4 401.9M639.4 401.9L643.5 408.2M647.5 414.5L651.6 420.7M651.6 420.7L655.7 427.0M655.7 427.0L659.8 433.3M659.8 433.3L663.9 439.6M663.9 439.6L668.0 445.9M668.0 445.9L672.1 452.2M676.1 458.5L680.2 464.8M680.2 464.8L684.3 471.1M606.1 334.1L610.2 340.4M610.2 340.4L614.2 346.7M614.2 346.7L618.3 352.9M622.4 359.2L626.5 365.5M634.7 378.1L638.8 384.4M642.8 390.7L646.9 397.0M651.0 403.3L655.1 409.6M655.1 409.6L659.2 415.8M659.2 415.8L663.3 422.1M671.4 434.7L675.5 441.0M687.8 459.9L691.9 466.2M601.4 310.3L605.5 316.6M609.5 322.9L613.6 329.2M617.7 335.5L621.8 341.8M621.8 341.8L625.9 348.0M634.0 360.6L638.1 366.9M642.2 373.2L646.3 379.5M662.6 404.7L666.7 410.9M666.7 410.9L670.8 417.2M670.8 417.2L674.9 423.5M679.0 429.8L683.1 436.1M687.1 442.4L691.2 448.7M691.2 448.7L695.3 455.0M695.3 455.0L699.4 461.3M613.0 311.7L617.1 318.0M621.2 324.3L625.3 330.6M645.7 362.0L649.8 368.3M649.8 368.3L653.8 374.6M653.8 374.6L657.9 380.9M670.2 399.8L674.3 406.0M674.3 406.0L678.4 412.3M686.5 424.9L690.6 431.2M698.8 443.8L702.9 450.1M702.9 450.1L706.9 456.4M706.9 456.4L711.0 462.7M624.6 313.1L628.7 319.4M628.7 319.4L632.8 325.7M632.8 325.7L636.9 332.0M636.9 332.0L641.0 338.2M645.1 344.5L649.1 350.8M649.1 350.8L653.2 357.1M653.2 357.1L657.3 363.4M665.5 376.0L669.6 382.3M673.6 388.6L677.7 394.9M677.7 394.9L681.8 401.1M694.1 420.0L698.2 426.3M698.2 426.3L702.2 432.6M706.3 438.9L710.4 445.2M710.4 445.2L714.5 451.5M714.5 451.5L718.6 457.8M624.0 295.6L628.1 301.9M628.1 301.9L632.2 308.2M652.6 339.6L656.7 345.9M660.8 352.2L664.9 358.5M673.0 371.1L677.1 377.4M685.3 390.0L689.4 396.2M689.4 396.2L693.5 402.5M631.6 290.7L635.6 297.0M639.7 303.3L643.8 309.6M643.8 309.6L647.9 315.9M660.2 334.7L664.2 341.0M664.2 341.0L668.3 347.3M676.5 359.9L680.6 366.2M688.7 378.8L692.8 385.0M701.0 397.6L705.1 403.9M713.3 416.5L717.3 422.8M721.4 429.1L725.5 435.4M643.2 292.1L647.3 298.4M675.9 342.4L680.0 348.7M684.0 355.0L688.1 361.3M692.2 367.6L696.3 373.9M700.4 380.1L704.5 386.4M708.5 392.7L712.6 399.0M712.6 399.0L716.7 405.3M716.7 405.3L720.8 411.6M720.8 411.6L724.9 417.9M724.9 417.9L729.0 424.2M729.0 424.2L733.1 430.5M733.1 430.5L737.1 436.8" fill="none" stroke="#f7e697" stroke-width="2.8" stroke-linecap="square"/><path d="M458.8 402.9L464.7 399.1M464.7 399.1L470.5 395.3M476.4 391.5L482.3 387.6M482.3 387.6L488.1 383.8M488.1 383.8L494.0 380.0M494.0 380.0L499.9 376.2M499.9 376.2L505.8 372.4M505.8 372.4L511.6 368.6M511.6 368.6L517.5 364.8M517.5 364.8L523.4 361.0M523.4 361.0L529.2 357.1M529.2 357.1L535.1 353.3M541.0 349.5L546.9 345.7M546.9 345.7L552.7 341.9M564.5 334.3L570.3 330.5M570.3 330.5L576.2 326.6M582.1 322.8L587.9 319.0M593.8 315.2L599.7 311.4M599.7 311.4L605.6 307.6M605.6 307.6L611.4 303.8M611.4 303.8L617.3 300.0M462.9 409.2L468.7 405.4M468.7 405.4L474.6 401.6M480.5 397.7L486.4 393.9M486.4 393.9L492.2 390.1M492.2 390.1L498.1 386.3M498.1 386.3L504.0 382.5M504.0 382.5L509.8 378.7M515.7 374.9L521.6 371.1M521.6 371.1L527.5 367.2M527.5 367.2L533.3 363.4M533.3 363.4L539.2 359.6M539.2 359.6L545.1 355.8M556.8 348.2L562.7 344.4M562.7 344.4L568.6 340.6M568.6 340.6L574.4 336.7M586.2 329.1L592.0 325.3M597.9 321.5L603.8 317.7M603.8 317.7L609.6 313.9M615.5 310.1L621.4 306.2M621.4 306.2L627.3 302.4M467.0 415.5L472.8 411.7M484.6 404.0L490.4 400.2M496.3 396.4L502.2 392.6M508.1 388.8L513.9 385.0M513.9 385.0L519.8 381.2M519.8 381.2L525.7 377.3M537.4 369.7L543.3 365.9M549.2 362.1L555.0 358.3M578.5 343.0L584.4 339.2M584.4 339.2L590.2 335.4M596.1 331.6L602.0 327.8M602.0 327.8L607.9 324.0M607.9 324.0L613.7 320.2M613.7 320.2L619.6 316.4M619.6 316.4L625.5 312.5M471.0 421.8L476.9 418.0M476.9 418.0L482.8 414.1M482.8 414.1L488.7 410.3M494.5 406.5L500.4 402.7M500.4 402.7L506.3 398.9M506.3 398.9L512.1 395.1M529.8 383.6L535.6 379.8M535.6 379.8L541.5 376.0M541.5 376.0L547.4 372.2M559.1 364.6L565.0 360.8M565.0 360.8L570.8 357.0M570.8 357.0L576.7 353.1M576.7 353.1L582.6 349.3M582.6 349.3L588.5 345.5M588.5 345.5L594.3 341.7M594.3 341.7L600.2 337.9M600.2 337.9L606.1 334.1M606.1 334.1L611.9 330.3M611.9 330.3L617.8 326.5M617.8 326.5L623.7 322.6M475.1 428.1L481.0 424.2M481.0 424.2L486.9 420.4M492.7 416.6L498.6 412.8M522.1 397.6L528.0 393.7M528.0 393.7L533.8 389.9M533.8 389.9L539.7 386.1M545.6 382.3L551.5 378.5M551.5 378.5L557.3 374.7M557.3 374.7L563.2 370.9M563.2 370.9L569.1 367.1M569.1 367.1L574.9 363.2M574.9 363.2L580.8 359.4M580.8 359.4L586.7 355.6M586.7 355.6L592.5 351.8M592.5 351.8L598.4 348.0M598.4 348.0L604.3 344.2M604.3 344.2L610.2 340.4M616.0 336.6L621.9 332.7M621.9 332.7L627.8 328.9M627.8 328.9L633.6 325.1M633.6 325.1L639.5 321.3M479.2 434.3L485.1 430.5M485.1 430.5L491.0 426.7M502.7 419.1L508.6 415.3M508.6 415.3L514.4 411.5M514.4 411.5L520.3 407.7M520.3 407.7L526.2 403.8M526.2 403.8L532.1 400.0M532.1 400.0L537.9 396.2M543.8 392.4L549.7 388.6M549.7 388.6L555.5 384.8M561.4 381.0L567.3 377.2M567.3 377.2L573.1 373.3M573.1 373.3L579.0 369.5M579.0 369.5L584.9 365.7M584.9 365.7L590.8 361.9M608.4 350.5L614.2 346.7M614.2 346.7L620.1 342.8M620.1 342.8L626.0 339.0M631.9 335.2L637.7 331.4M483.3 440.6L489.2 436.8M489.2 436.8L495.0 433.0M530.3 410.1L536.1 406.3M536.1 406.3L542.0 402.5M542.0 402.5L547.9 398.7M547.9 398.7L553.7 394.9M553.7 394.9L559.6 391.1M559.6 391.1L565.5 387.3M565.5 387.3L571.4 383.4M583.1 375.8L589.0 372.0M606.6 360.6L612.5 356.8M612.5 356.8L618.3 352.9M618.3 352.9L624.2 349.1M624.2 349.1L630.1 345.3M630.1 345.3L635.9 341.5M493.3 443.1L499.1 439.3M510.9 431.7L516.7 427.9M540.2 412.6L546.1 408.8M546.1 408.8L552.0 405.0M557.8 401.2L563.7 397.4M575.4 389.7L581.3 385.9M581.3 385.9L587.2 382.1M598.9 374.5L604.8 370.7M604.8 370.7L610.7 366.9M610.7 366.9L616.5 363.1M628.3 355.4L634.2 351.6M491.5 453.2L497.3 449.4M497.3 449.4L503.2 445.6M503.2 445.6L509.1 441.8M509.1 441.8L515.0 438.0M526.7 430.3L532.6 426.5M538.4 422.7L544.3 418.9M556.0 411.3L561.9 407.5M561.9 407.5L567.8 403.7M567.8 403.7L573.7 399.8M573.7 399.8L579.5 396.0M579.5 396.0L585.4 392.2M585.4 392.2L591.3 388.4M591.3 388.4L597.1 384.6M597.1 384.6L603.0 380.8M608.9 377.0L614.8 373.2M614.8 373.2L620.6 369.3M620.6 369.3L626.5 365.5M632.4 361.7L638.2 357.9M644.1 354.1L650.0 350.3M650.0 350.3L655.9 346.5M495.6 459.5L501.4 455.7M501.4 455.7L507.3 451.9M507.3 451.9L513.2 448.1M513.2 448.1L519.0 444.3M519.0 444.3L524.9 440.4M530.8 436.6L536.7 432.8M536.7 432.8L542.5 429.0M548.4 425.2L554.3 421.4M554.3 421.4L560.1 417.6M560.1 417.6L566.0 413.8M566.0 413.8L571.9 409.9M577.7 406.1L583.6 402.3M583.6 402.3L589.5 398.5M589.5 398.5L595.4 394.7M595.4 394.7L601.2 390.9M607.1 387.1L613.0 383.3M613.0 383.3L618.8 379.4M630.6 371.8L636.5 368.0M636.5 368.0L642.3 364.2M642.3 364.2L648.2 360.4M648.2 360.4L654.1 356.6M499.6 465.8L505.5 462.0M505.5 462.0L511.4 458.2M511.4 458.2L517.3 454.4M540.7 439.1L546.6 435.3M546.6 435.3L552.5 431.5M564.2 423.9L570.1 420.0M570.1 420.0L576.0 416.2M576.0 416.2L581.8 412.4M581.8 412.4L587.7 408.6M587.7 408.6L593.6 404.8M593.6 404.8L599.4 401.0M617.1 389.5L622.9 385.7M634.7 378.1L640.5 374.3M652.3 366.7L658.1 362.9M503.7 472.1L509.6 468.3M509.6 468.3L515.5 464.5M527.2 456.8L533.1 453.0M533.1 453.0L538.9 449.2M538.9 449.2L544.8 445.4M544.8 445.4L550.7 441.6M550.7 441.6L556.6 437.8M556.6 437.8L562.4 434.0M568.3 430.1L574.2 426.3M574.2 426.3L580.0 422.5M580.0 422.5L585.9 418.7M585.9 418.7L591.8 414.9M591.8 414.9L597.7 411.1M603.5 407.3L609.4 403.5M609.4 403.5L615.3 399.6M632.9 388.2L638.8 384.4M638.8 384.4L644.6 380.6M644.6 380.6L650.5 376.8M656.4 373.0L662.2 369.1M662.2 369.1L668.1 365.3M507.8 478.4L513.7 474.6M525.4 466.9L531.3 463.1M531.3 463.1L537.2 459.3M543.0 455.5L548.9 451.7M554.8 447.9L560.6 444.1M560.6 444.1L566.5 440.2M572.4 436.4L578.3 432.6M578.3 432.6L584.1 428.8M601.7 417.4L607.6 413.6M613.5 409.8L619.4 405.9M625.2 402.1L631.1 398.3M631.1 398.3L637.0 394.5M637.0 394.5L642.8 390.7M648.7 386.9L654.6 383.1M654.6 383.1L660.4 379.3M660.4 379.3L666.3 375.4M666.3 375.4L672.2 371.6M511.9 484.7L517.8 480.9M517.8 480.9L523.6 477.0M523.6 477.0L529.5 473.2M529.5 473.2L535.4 469.4M535.4 469.4L541.2 465.6M541.2 465.6L547.1 461.8M553.0 458.0L558.9 454.2M558.9 454.2L564.7 450.4M564.7 450.4L570.6 446.5M570.6 446.5L576.5 442.7M576.5 442.7L582.3 438.9M582.3 438.9L588.2 435.1M588.2 435.1L594.1 431.3M600.0 427.5L605.8 423.7M605.8 423.7L611.7 419.9M611.7 419.9L617.6 416.0M623.4 412.2L629.3 408.4M635.2 404.6L641.1 400.8M641.1 400.8L646.9 397.0M652.8 393.2L658.7 389.4M658.7 389.4L664.5 385.5M516.0 491.0L521.9 487.1M539.5 475.7L545.3 471.9M545.3 471.9L551.2 468.1M551.2 468.1L557.1 464.3M557.1 464.3L562.9 460.5M562.9 460.5L568.8 456.6M574.7 452.8L580.6 449.0M580.6 449.0L586.4 445.2M586.4 445.2L592.3 441.4M609.9 430.0L615.8 426.1M615.8 426.1L621.7 422.3M621.7 422.3L627.5 418.5M627.5 418.5L633.4 414.7M633.4 414.7L639.3 410.9M639.3 410.9L645.1 407.1M645.1 407.1L651.0 403.3M662.7 395.6L668.6 391.8M668.6 391.8L674.5 388.0M520.1 497.2L525.9 493.4M525.9 493.4L531.8 489.6M531.8 489.6L537.7 485.8M537.7 485.8L543.5 482.0M543.5 482.0L549.4 478.2M549.4 478.2L555.3 474.4M555.3 474.4L561.2 470.6M561.2 470.6L567.0 466.7M567.0 466.7L572.9 462.9M572.9 462.9L578.8 459.1M578.8 459.1L584.6 455.3M584.6 455.3L590.5 451.5M590.5 451.5L596.4 447.7M596.4 447.7L602.3 443.9M602.3 443.9L608.1 440.1M608.1 440.1L614.0 436.2M614.0 436.2L619.9 432.4M619.9 432.4L625.7 428.6M649.2 413.4L655.1 409.6M655.1 409.6L661.0 405.7M666.8 401.9L672.7 398.1M524.1 503.5L530.0 499.7M559.4 480.7L565.2 476.8M565.2 476.8L571.1 473.0M571.1 473.0L577.0 469.2M594.6 457.8L600.5 454.0M618.1 442.5L624.0 438.7M624.0 438.7L629.8 434.9M629.8 434.9L635.7 431.1M635.7 431.1L641.6 427.3M641.6 427.3L647.4 423.5M653.3 419.7L659.2 415.8M676.8 404.4L682.7 400.6M682.7 400.6L688.5 396.8M540.0 502.2L545.8 498.4M545.8 498.4L551.7 494.6M557.6 490.8L563.5 486.9M569.3 483.1L575.2 479.3M575.2 479.3L581.1 475.5M581.1 475.5L586.9 471.7M592.8 467.9L598.7 464.1M610.4 456.5L616.3 452.6M616.3 452.6L622.2 448.8M622.2 448.8L628.0 445.0M639.8 437.4L645.6 433.6M651.5 429.8L657.4 426.0M657.4 426.0L663.3 422.1M663.3 422.1L669.1 418.3M675.0 414.5L680.9 410.7M680.9 410.7L686.7 406.9M686.7 406.9L692.6 403.1M532.3 516.1L538.2 512.3M538.2 512.3L544.1 508.5M561.7 497.1L567.5 493.2M567.5 493.2L573.4 489.4M573.4 489.4L579.3 485.6M579.3 485.6L585.2 481.8M585.2 481.8L591.0 478.0M596.9 474.2L602.8 470.4M614.5 462.7L620.4 458.9M620.4 458.9L626.3 455.1M638.0 447.5L643.9 443.7M643.9 443.7L649.7 439.9M649.7 439.9L655.6 436.1M661.5 432.2L667.3 428.4M667.3 428.4L673.2 424.6M673.2 424.6L679.1 420.8M679.1 420.8L685.0 417.0M690.8 413.2L696.7 409.4M542.3 518.6L548.1 514.8M559.9 507.2L565.8 503.3M571.6 499.5L577.5 495.7M577.5 495.7L583.4 491.9M583.4 491.9L589.2 488.1M589.2 488.1L595.1 484.3M595.1 484.3L601.0 480.5M601.0 480.5L606.9 476.7M606.9 476.7L612.7 472.8M612.7 472.8L618.6 469.0M618.6 469.0L624.5 465.2M630.3 461.4L636.2 457.6M647.9 450.0L653.8 446.2M671.4 434.7L677.3 430.9M677.3 430.9L683.2 427.1M683.2 427.1L689.0 423.3M694.9 419.5L700.8 415.7M540.5 528.7L546.4 524.9M546.4 524.9L552.2 521.1M552.2 521.1L558.1 517.3M558.1 517.3L564.0 513.4M564.0 513.4L569.8 509.6M575.7 505.8L581.6 502.0M587.5 498.2L593.3 494.4M593.3 494.4L599.2 490.6M599.2 490.6L605.1 486.8M605.1 486.8L610.9 482.9M610.9 482.9L616.8 479.1M652.0 456.3L657.9 452.4M663.8 448.6L669.6 444.8M675.5 441.0L681.4 437.2M693.1 429.6L699.0 425.8M699.0 425.8L704.9 421.9M550.4 531.2L556.3 527.4M556.3 527.4L562.2 523.5M562.2 523.5L568.1 519.7M568.1 519.7L573.9 515.9M585.7 508.3L591.5 504.5M597.4 500.7L603.3 496.9M603.3 496.9L609.2 493.0M609.2 493.0L615.0 489.2M615.0 489.2L620.9 485.4M620.9 485.4L626.8 481.6M626.8 481.6L632.6 477.8M638.5 474.0L644.4 470.2M644.4 470.2L650.2 466.4M662.0 458.7L667.9 454.9M667.9 454.9L673.7 451.1M673.7 451.1L679.6 447.3M679.6 447.3L685.5 443.5M685.5 443.5L691.3 439.7M691.3 439.7L697.2 435.9M697.2 435.9L703.1 432.0M703.1 432.0L709.0 428.2M548.7 541.3L554.5 537.5M566.3 529.8L572.1 526.0M572.1 526.0L578.0 522.2M578.0 522.2L583.9 518.4M583.9 518.4L589.8 514.6M589.8 514.6L595.6 510.8M595.6 510.8L601.5 507.0M601.5 507.0L607.4 503.2M613.2 499.3L619.1 495.5M619.1 495.5L625.0 491.7M636.7 484.1L642.6 480.3M642.6 480.3L648.5 476.5M648.5 476.5L654.3 472.7M654.3 472.7L660.2 468.8M660.2 468.8L666.1 465.0M683.7 453.6L689.6 449.8M689.6 449.8L695.4 446.0M707.2 438.3L713.0 434.5M552.7 547.6L558.6 543.8M558.6 543.8L564.5 539.9M564.5 539.9L570.4 536.1M593.8 520.9L599.7 517.1M599.7 517.1L605.6 513.3M605.6 513.3L611.4 509.4M611.4 509.4L617.3 505.6M646.7 486.6L652.5 482.8M652.5 482.8L658.4 478.9M658.4 478.9L664.3 475.1M670.2 471.3L676.0 467.5M687.8 459.9L693.6 456.1M693.6 456.1L699.5 452.3M699.5 452.3L705.4 448.4M556.8 553.9L562.7 550.0M562.7 550.0L568.6 546.2M568.6 546.2L574.4 542.4M574.4 542.4L580.3 538.6M580.3 538.6L586.2 534.8M586.2 534.8L592.1 531.0M592.1 531.0L597.9 527.2M597.9 527.2L603.8 523.4M603.8 523.4L609.7 519.5M609.7 519.5L615.5 515.7M633.1 504.3L639.0 500.5M639.0 500.5L644.9 496.7M644.9 496.7L650.8 492.9M662.5 485.2L668.4 481.4M668.4 481.4L674.2 477.6M674.2 477.6L680.1 473.8M686.0 470.0L691.9 466.2M691.9 466.2L697.7 462.4M709.5 454.7L715.3 450.9M715.3 450.9L721.2 447.1M435.3 418.1L439.4 424.4M439.4 424.4L443.5 430.7M447.6 437.0L451.6 443.3M463.9 462.2L468.0 468.5M472.1 474.8L476.2 481.0M480.2 487.3L484.3 493.6M484.3 493.6L488.4 499.9M492.5 506.2L496.6 512.5M504.8 525.1L508.8 531.4M508.8 531.4L512.9 537.7M512.9 537.7L517.0 543.9M525.2 556.5L529.3 562.8M529.3 562.8L533.3 569.1M533.3 569.1L537.4 575.4M446.9 419.5L451.0 425.8M451.0 425.8L455.1 432.1M455.1 432.1L459.2 438.4M459.2 438.4L463.3 444.7M483.7 476.1L487.8 482.4M487.8 482.4L491.9 488.7M500.0 501.3L504.1 507.6M508.2 513.9L512.3 520.2M512.3 520.2L516.4 526.5M516.4 526.5L520.5 532.8M520.5 532.8L524.6 539.0M524.6 539.0L528.6 545.3M528.6 545.3L532.7 551.6M532.7 551.6L536.8 557.9M540.9 564.2L545.0 570.5M454.5 414.6L458.6 420.9M458.6 420.9L462.7 427.2M470.8 439.8L474.9 446.1M474.9 446.1L479.0 452.4M483.1 458.7L487.2 465.0M491.3 471.2L495.3 477.5M495.3 477.5L499.4 483.8M503.5 490.1L507.6 496.4M507.6 496.4L511.7 502.7M519.8 515.3L523.9 521.6M523.9 521.6L528.0 527.9M528.0 527.9L532.1 534.1M536.2 540.4L540.3 546.7M548.4 559.3L552.5 565.6M458.0 403.4L462.0 409.7M470.2 422.3L474.3 428.6M478.4 434.9L482.5 441.2M482.5 441.2L486.5 447.5M486.5 447.5L490.6 453.8M507.0 478.9L511.1 485.2M511.1 485.2L515.1 491.5M527.4 510.4L531.5 516.7M531.5 516.7L535.6 522.9M535.6 522.9L539.6 529.2M547.8 541.8L551.9 548.1M477.8 417.4L481.8 423.7M481.8 423.7L485.9 430.0M485.9 430.0L490.0 436.3M494.1 442.6L498.2 448.9M498.2 448.9L502.3 455.1M506.4 461.4L510.4 467.7M510.4 467.7L514.5 474.0M514.5 474.0L518.6 480.3M522.7 486.6L526.8 492.9M539.0 511.8L543.1 518.0M543.1 518.0L547.2 524.3M547.2 524.3L551.3 530.6M559.5 543.2L563.5 549.5M563.5 549.5L567.6 555.8M473.1 393.6L477.1 399.9M497.6 431.4L501.6 437.7M505.7 444.0L509.8 450.2M513.9 456.5L518.0 462.8M522.1 469.1L526.2 475.4M526.2 475.4L530.2 481.7M530.2 481.7L534.3 488.0M534.3 488.0L538.4 494.3M546.6 506.9L550.7 513.1M550.7 513.1L554.7 519.4M562.9 532.0L567.0 538.3M484.7 395.0L488.8 401.3M505.1 426.5L509.2 432.8M509.2 432.8L513.3 439.1M513.3 439.1L517.4 445.3M517.4 445.3L521.4 451.6M533.7 470.5L537.8 476.8M541.9 483.1L546.0 489.4M546.0 489.4L550.0 495.7M558.2 508.2L562.3 514.5M570.5 527.1L574.5 533.4M574.5 533.4L578.6 539.7M578.6 539.7L582.7 546.0M488.1 383.8L492.2 390.1M492.2 390.1L496.3 396.4M504.5 409.0L508.6 415.3M508.6 415.3L512.7 421.6M512.7 421.6L516.7 427.9M520.8 434.2L524.9 440.4M524.9 440.4L529.0 446.7M529.0 446.7L533.1 453.0M541.2 465.6L545.3 471.9M545.3 471.9L549.4 478.2M549.4 478.2L553.5 484.5M561.7 497.1L565.8 503.3M565.8 503.3L569.8 509.6M573.9 515.9L578.0 522.2M578.0 522.2L582.1 528.5M582.1 528.5L586.2 534.8M495.7 378.9L499.8 385.2M503.9 391.5L507.9 397.8M507.9 397.8L512.0 404.1M520.2 416.7L524.3 423.0M524.3 423.0L528.4 429.3M532.5 435.5L536.5 441.8M536.5 441.8L540.6 448.1M544.7 454.4L548.8 460.7M552.9 467.0L557.0 473.3M565.1 485.9L569.2 492.2M569.2 492.2L573.3 498.4M585.6 517.3L589.6 523.6M593.7 529.9L597.8 536.2M507.3 380.3L511.4 386.6M511.4 386.6L515.5 392.9M523.7 405.5L527.8 411.8M540.0 430.6L544.1 436.9M544.1 436.9L548.2 443.2M560.4 462.1L564.5 468.4M568.6 474.7L572.7 481.0M584.9 499.8L589.0 506.1M593.1 512.4L597.2 518.7M597.2 518.7L601.3 525.0M514.9 375.4L519.0 381.7M519.0 381.7L523.0 388.0M523.0 388.0L527.1 394.3M531.2 400.6L535.3 406.9M535.3 406.9L539.4 413.2M539.4 413.2L543.5 419.4M551.6 432.0L555.7 438.3M563.9 450.9L568.0 457.2M572.1 463.5L576.1 469.8M588.4 488.6L592.5 494.9M592.5 494.9L596.6 501.2M600.7 507.5L604.7 513.8M608.8 520.1L612.9 526.4M518.3 364.2L522.4 370.5M522.4 370.5L526.5 376.8M534.7 389.4L538.8 395.7M551.0 414.5L555.1 420.8M559.2 427.1L563.3 433.4M563.3 433.4L567.4 439.7M567.4 439.7L571.4 446.0M571.4 446.0L575.5 452.3M575.5 452.3L579.6 458.6M583.7 464.9L587.8 471.2M591.9 477.4L595.9 483.7M608.2 502.6L612.3 508.9M616.4 515.2L620.5 521.5M530.0 365.6L534.1 371.9M550.4 397.1L554.5 403.4M570.8 428.5L574.9 434.8M583.1 447.4L587.2 453.7M587.2 453.7L591.2 460.0M595.3 466.3L599.4 472.5M603.5 478.8L607.6 485.1M611.7 491.4L615.8 497.7M623.9 510.3L628.0 516.6M533.4 354.4L537.5 360.7M541.6 367.0L545.7 373.3M545.7 373.3L549.8 379.6M549.8 379.6L553.9 385.9M553.9 385.9L557.9 392.2M570.2 411.0L574.3 417.3M578.4 423.6L582.5 429.9M590.6 442.5L594.7 448.8M611.0 473.9L615.1 480.2M623.3 492.8L627.4 499.1M631.5 505.4L635.6 511.7M549.2 362.1L553.2 368.4M557.3 374.7L561.4 381.0M561.4 381.0L565.5 387.3M569.6 393.5L573.7 399.8M577.7 406.1L581.8 412.4M598.2 437.6L602.3 443.9M602.3 443.9L606.3 450.2M606.3 450.2L610.4 456.5M610.4 456.5L614.5 462.7M618.6 469.0L622.7 475.3M630.8 487.9L634.9 494.2M634.9 494.2L639.0 500.5M548.5 344.6L552.6 350.9M552.6 350.9L556.7 357.2M556.7 357.2L560.8 363.5M560.8 363.5L564.9 369.8M564.9 369.8L569.0 376.1M569.0 376.1L573.0 382.4M581.2 394.9L585.3 401.2M593.5 413.8L597.5 420.1M601.6 426.4L605.7 432.7M605.7 432.7L609.8 439.0M609.8 439.0L613.9 445.3M626.1 464.1L630.2 470.4M630.2 470.4L634.3 476.7M634.3 476.7L638.4 483.0M646.6 495.6L650.7 501.9M560.2 346.0L564.2 352.3M572.4 364.9L576.5 371.2M580.6 377.5L584.7 383.7M588.8 390.0L592.8 396.3M592.8 396.3L596.9 402.6M596.9 402.6L601.0 408.9M605.1 415.2L609.2 421.5M617.4 434.1L621.4 440.4M621.4 440.4L625.5 446.6M641.9 471.8L645.9 478.1M645.9 478.1L650.0 484.4M650.0 484.4L654.1 490.7M654.1 490.7L658.2 497.0M575.9 353.7L580.0 360.0M600.4 391.4L604.5 397.7M604.5 397.7L608.6 404.0M608.6 404.0L612.6 410.3M612.6 410.3L616.7 416.6M616.7 416.6L620.8 422.9M637.2 448.0L641.2 454.3M645.3 460.6L649.4 466.9M657.6 479.5L661.7 485.8M575.3 336.2L579.3 342.5M583.4 348.8L587.5 355.1M587.5 355.1L591.6 361.4M591.6 361.4L595.7 367.7M607.9 386.5L612.0 392.8M616.1 399.1L620.2 405.4M620.2 405.4L624.3 411.7M661.0 468.3L665.1 474.6M578.7 325.0L582.8 331.3M582.8 331.3L586.9 337.6M591.0 343.9L595.1 350.2M599.1 356.5L603.2 362.8M603.2 362.8L607.3 369.0M607.3 369.0L611.4 375.3M615.5 381.6L619.6 387.9M619.6 387.9L623.7 394.2M623.7 394.2L627.7 400.5M627.7 400.5L631.8 406.8M648.2 431.9L652.2 438.2M656.3 444.5L660.4 450.8M672.7 469.7L676.8 476.0M594.4 332.7L598.5 339.0M598.5 339.0L602.6 345.3M602.6 345.3L606.7 351.6M606.7 351.6L610.8 357.8M631.2 389.3L635.3 395.6M635.3 395.6L639.4 401.9M639.4 401.9L643.5 408.2M647.5 414.5L651.6 420.7M651.6 420.7L655.7 427.0M655.7 427.0L659.8 433.3M659.8 433.3L663.9 439.6M663.9 439.6L668.0 445.9M668.0 445.9L672.1 452.2M676.1 458.5L680.2 464.8M680.2 464.8L684.3 471.1M606.1 334.1L610.2 340.4M610.2 340.4L614.2 346.7M614.2 346.7L618.3 352.9M622.4 359.2L626.5 365.5M634.7 378.1L638.8 384.4M642.8 390.7L646.9 397.0M651.0 403.3L655.1 409.6M655.1 409.6L659.2 415.8M659.2 415.8L663.3 422.1M671.4 434.7L675.5 441.0M687.8 459.9L691.9 466.2M601.4 310.3L605.5 316.6M609.5 322.9L613.6 329.2M617.7 335.5L621.8 341.8M621.8 341.8L625.9 348.0M634.0 360.6L638.1 366.9M642.2 373.2L646.3 379.5M662.6 404.7L666.7 410.9M666.7 410.9L670.8 417.2M670.8 417.2L674.9 423.5M679.0 429.8L683.1 436.1M687.1 442.4L691.2 448.7M691.2 448.7L695.3 455.0M695.3 455.0L699.4 461.3M613.0 311.7L617.1 318.0M621.2 324.3L625.3 330.6M645.7 362.0L649.8 368.3M649.8 368.3L653.8 374.6M653.8 374.6L657.9 380.9M670.2 399.8L674.3 406.0M674.3 406.0L678.4 412.3M686.5 424.9L690.6 431.2M698.8 443.8L702.9 450.1M702.9 450.1L706.9 456.4M706.9 456.4L711.0 462.7M624.6 313.1L628.7 319.4M628.7 319.4L632.8 325.7M632.8 325.7L636.9 332.0M636.9 332.0L641.0 338.2M645.1 344.5L649.1 350.8M649.1 350.8L653.2 357.1M653.2 357.1L657.3 363.4M665.5 376.0L669.6 382.3M673.6 388.6L677.7 394.9M677.7 394.9L681.8 401.1M694.1 420.0L698.2 426.3M698.2 426.3L702.2 432.6M706.3 438.9L710.4 445.2M710.4 445.2L714.5 451.5M714.5 451.5L718.6 457.8M624.0 295.6L628.1 301.9M628.1 301.9L632.2 308.2M652.6 339.6L656.7 345.9M660.8 352.2L664.9 358.5M673.0 371.1L677.1 377.4M685.3 390.0L689.4 396.2M689.4 396.2L693.5 402.5M631.6 290.7L635.6 297.0M639.7 303.3L643.8 309.6M643.8 309.6L647.9 315.9M660.2 334.7L664.2 341.0M664.2 341.0L668.3 347.3M676.5 359.9L680.6 366.2M688.7 378.8L692.8 385.0M701.0 397.6L705.1 403.9M713.3 416.5L717.3 422.8M721.4 429.1L725.5 435.4M643.2 292.1L647.3 298.4M675.9 342.4L680.0 348.7M684.0 355.0L688.1 361.3M692.2 367.6L696.3 373.9M700.4 380.1L704.5 386.4M708.5 392.7L712.6 399.0M712.6 399.0L716.7 405.3M716.7 405.3L720.8 411.6M720.8 411.6L724.9 417.9M724.9 417.9L729.0 424.2M729.0 424.2L733.1 430.5M733.1 430.5L737.1 436.8" fill="none" stroke="#bdbbb6" stroke-width="1.4" stroke-dasharray="1.4 1.4"/></g>
<path d="M508.4 535.9 L515.0 517.5 L525.6 516.1 L520.3 540.0 Z" fill="#daf5c9"/>
<path d="M625.6 488.5 L636.2 489.8 L634.9 493.8 L625.6 493.1 Z" fill="#daf5c9"/>
<path d="M616.0 418.0 L625.0 413.0 L624.0 421.0 L617.0 423.0 Z" fill="#daf5c9"/>
<path d="M585.0 330.0 L588.0 328.0 L589.0 333.0 Z" fill="#daf5c9"/>
<mask id="railmask" maskUnits="userSpaceOnUse" x="540" y="430" width="110" height="110"><path d="M570.5 458.8 L580.2 453.5 L595.1 455.3 L614.5 457.0 L626.7 464.9 L628.5 472.8 L623.2 476.3 L609.0 474.0 L603.0 478.0 L606.0 500.0 L610.9 504.5 L608.0 510.0 L597.8 522.0 L584.6 527.3 L575.8 527.3 L561.8 522.0 L563.5 516.7 L574.9 500.9 L568.8 490.4 L565.3 480.7 L567.0 465.8 Z" fill="#fff" filter="url(#rough)"/></mask>
<rect x="540" y="430" width="110" height="110" fill="url(#railpat)" mask="url(#railmask)"/>
<path d="M930.6 524.0 L943.7 519.6 L952.5 518.5 L959.1 515.2 L956.9 526.2 L943.7 530.6 L932.8 529.5 Z" fill="url(#railpat)" stroke="#f9e68c" stroke-width="1.5"/>
<path d="M591.6 470.2 L603.9 472.8 L600.4 483.4 L605.7 501.8 L597.8 504.5 L589.0 491.3 L586.3 486.9 Z" fill="#dde9ee"/>
<path d="M612.0 461.0 L616.0 460.0 L619.0 470.0 L615.0 473.0 Z" fill="#dde9ee"/>
<path d="M613.0 390.0 L605.4 403.5 L592.2 415.3 L584.3 425.9 L576.4 439.1 L565.9 449.6 L552.7 454.9 L545.3 462.1 L533.5 478.0 L521.6 480.6 L520.3 485.9 L517.7 499.0 L507.1 512.2 L501.9 520.1 L497.9 533.3 L494.0 540.0" fill="none" stroke="#9ac4f3" stroke-width="1.6" stroke-linejoin="round"/>
<path d="M237.9 208.7 C237.7 209.4 236.5 210.5 236.8 213.1 C237.0 215.6 236.2 221.7 239.4 224.0 C242.6 226.4 251.5 225.7 255.9 227.3 C260.3 229.0 262.1 231.9 265.8 233.9 C269.4 235.9 274.2 238.5 277.8 239.4 C281.5 240.3 285.7 238.5 287.7 239.4 C289.7 240.3 289.0 242.9 289.9 244.9 C290.8 246.9 291.2 249.8 293.2 251.5 C295.2 253.1 299.1 254.6 302.0 254.8 C304.9 255.0 310.1 253.9 310.8 252.6 C311.5 251.3 306.9 248.9 306.4 247.1 C305.9 245.3 305.7 243.0 307.5 241.6 C309.3 240.2 311.3 239.2 317.4 238.8 C323.4 238.3 335.7 238.3 343.7 238.8 C351.8 239.2 360.6 240.6 365.7 241.6 C370.8 242.6 372.5 244.9 374.5 244.9 C376.5 244.9 376.7 241.4 377.8 241.6 C378.9 241.8 377.6 244.5 381.1 246.0 C384.5 247.5 393.9 249.8 398.6 250.4 C403.4 250.9 407.2 250.0 409.6 249.3 C412.0 248.6 411.6 246.0 412.9 246.0 C414.2 246.0 413.1 248.4 417.3 249.3 C421.5 250.2 432.1 249.7 438.2 251.5 C444.2 253.3 451.0 257.9 453.5 260.3 C456.1 262.7 451.7 263.2 453.5 265.8 C455.4 268.3 462.0 274.7 464.5 275.7 C467.1 276.6 464.7 271.9 468.9 271.3 C473.2 270.6 483.9 271.8 490.0 271.8 C496.1 271.8 499.9 269.7 505.4 271.3 C510.9 272.8 518.2 277.8 522.9 281.1 C527.7 284.4 529.5 288.6 533.9 291.0 C538.3 293.4 545.6 293.2 549.3 295.4 C553.0 297.6 553.5 302.6 555.9 304.2 C558.3 305.9 560.8 306.9 563.6 305.3 C566.3 303.7 570.5 295.2 572.4 294.3 C574.2 293.4 574.7 296.3 574.6 299.8 C574.4 303.3 573.1 310.8 571.3 315.2 C569.4 319.6 565.0 323.4 563.6 326.2 C562.1 328.9 561.2 330.0 562.5 331.7 C563.8 333.3 568.3 335.5 571.3 336.0 C574.2 336.6 577.5 336.4 580.0 334.9 C582.6 333.5 585.2 330.6 586.6 327.3 C588.1 324.0 587.5 319.2 588.8 315.2 C590.1 311.2 591.4 304.9 594.3 303.1 C597.2 301.3 602.0 304.9 606.4 304.2 C610.8 303.5 618.5 300.5 620.7 298.7 C622.9 296.9 620.7 295.6 619.6 293.2 C618.5 290.8 615.7 287.0 614.1 284.4 C612.4 281.9 609.1 280.8 609.7 277.8 C610.2 274.9 616.1 268.7 617.4 266.9 M207.1 304.6 C207.9 305.1 206.8 305.7 212.0 307.5 C217.2 309.3 231.0 314.3 238.3 315.6 C245.6 317.0 249.3 313.7 255.9 315.6 C262.5 317.6 271.6 324.0 277.8 327.3 C284.1 330.6 288.8 333.7 293.2 335.4 C297.6 337.1 298.7 334.7 304.2 337.6 C309.7 340.4 319.6 348.2 326.2 352.5 C332.8 356.8 338.6 361.3 343.7 363.5 C348.9 365.7 352.2 363.9 356.9 365.7 C361.7 367.5 367.2 371.7 372.3 374.5 C377.4 377.2 378.7 379.0 387.7 382.2 C396.6 385.3 414.7 389.2 426.1 393.2 C437.4 397.3 448.2 401.9 455.7 406.5 C463.2 411.1 466.0 416.9 471.1 420.7 C476.2 424.6 483.3 427.9 486.5 429.5 C489.6 431.2 489.8 428.1 490.0 430.6 C490.2 433.2 488.0 440.0 487.6 444.9 C487.2 449.8 487.2 457.3 487.6 460.3 C488.0 463.3 487.8 461.1 490.0 462.7 C492.2 464.4 496.8 467.3 500.5 470.0 C504.3 472.8 508.4 475.3 512.4 479.3 C516.3 483.2 520.7 489.4 524.2 493.8 C527.8 498.1 531.9 503.6 533.5 505.6 M483.2 292.8 C484.3 292.9 486.7 292.9 490.0 293.7 C493.3 294.5 499.9 294.8 503.2 297.6 C506.5 300.5 508.5 304.9 509.8 310.8 C511.0 316.6 510.1 325.1 510.9 332.8 C511.6 340.4 512.1 350.7 514.2 356.9 C516.2 363.1 519.6 365.7 522.9 370.1 C526.2 374.5 530.6 380.5 533.9 383.3 C537.2 386.0 540.0 386.1 542.7 386.6 C545.5 387.0 546.4 389.9 550.4 386.0 C554.4 382.2 559.7 368.2 566.9 363.5 C574.0 358.8 586.3 358.0 593.2 358.0 C600.2 358.0 605.3 361.1 608.6 363.5 C611.9 365.9 612.3 370.8 613.0 372.3 M586.6 315.2 L614.1 316.3 M599.8 309.7 C602.0 311.0 609.3 314.3 613.0 317.4 C616.6 320.5 621.0 324.7 621.8 328.4 C622.5 332.0 616.3 336.4 617.4 339.3 C618.5 342.3 626.2 347.4 628.4 345.9 C630.6 344.5 628.0 335.1 630.6 330.6 C633.1 326.0 640.8 321.4 643.7 318.5 C646.7 315.5 646.7 315.4 648.1 313.0 C649.6 310.6 650.3 308.8 652.5 304.2 C654.7 299.6 659.8 288.6 661.3 285.5 M643.7 315.2 C646.7 314.6 656.9 313.7 661.3 311.9 C665.7 310.1 667.9 305.5 670.1 304.2 C672.3 302.9 674.1 307.1 674.5 304.2 C674.8 301.3 671.2 290.7 672.3 286.6 C673.4 282.6 674.8 281.3 681.1 280.0 C687.3 278.8 699.4 279.1 709.6 278.9 C719.9 278.8 734.5 277.7 742.6 278.9 C750.6 280.2 750.0 284.8 757.9 286.6 C765.8 288.5 783.2 288.1 790.0 289.9 C796.8 291.8 795.9 295.2 798.8 297.6 C801.7 300.0 805.7 302.7 807.6 304.2 C809.4 305.7 809.4 306.0 809.8 306.4 M676.7 303.1 C678.5 305.1 685.1 311.2 687.7 315.2 C690.2 319.2 690.2 327.3 692.1 327.3 C693.9 327.3 695.7 317.9 698.6 315.2 C701.6 312.4 702.3 311.2 709.6 310.8 C716.9 310.4 734.1 313.2 742.6 313.0 C751.0 312.8 756.8 312.1 760.1 309.7 C763.4 307.3 759.8 300.0 762.3 298.7 C764.9 297.4 770.9 301.3 775.5 302.0 C780.1 302.7 787.6 302.9 790.0 303.1 M648.1 315.2 C648.9 317.4 651.1 325.4 652.5 328.4 C654.0 331.3 656.9 330.2 656.9 332.8 C656.9 335.3 653.6 339.0 652.5 343.7 C651.4 348.5 649.6 358.0 650.3 361.3 C651.1 364.6 652.5 361.7 656.9 363.5 C661.3 365.3 673.2 369.4 676.7 372.3 C680.2 375.2 678.3 379.1 677.8 381.1 C677.3 383.1 673.8 386.0 673.5 384.3 C673.3 382.5 675.5 373.3 676.6 370.5 C677.6 367.8 679.4 368.3 680.0 367.9 M571.3 361.3 C571.6 358.0 572.4 346.7 573.5 341.5 C574.6 336.4 577.1 332.4 577.8 330.6 M654.7 353.6 C660.2 353.1 678.9 351.4 687.7 350.3 C696.4 349.2 701.9 345.9 707.4 347.0 C712.9 348.1 716.6 353.8 720.6 356.9 C724.6 360.0 729.4 361.7 731.6 365.7 C733.8 369.7 733.4 377.0 733.8 381.1 C734.1 385.1 734.9 385.6 733.8 390.0 C732.7 394.5 729.2 401.7 727.2 407.6 C725.2 413.4 722.6 422.2 721.7 425.1 M687.7 351.4 C687.3 352.7 685.3 356.9 685.5 359.1 C685.6 361.3 688.2 363.7 688.8 364.6 M747.0 376.7 L762.3 372.3 M747.0 372.3 C746.2 374.1 743.7 380.3 742.6 383.3 C741.5 386.2 740.7 388.9 740.4 390.1 M619.6 353.6 C620.3 355.6 622.9 361.9 624.0 365.7 C625.1 369.5 625.8 374.8 626.2 376.7 M730.7 208.7 C733.3 209.0 742.0 209.9 746.1 210.9 C750.1 211.8 751.6 213.2 754.9 214.2 C758.2 215.1 762.5 214.9 765.8 216.4 C769.1 217.8 771.7 221.3 774.6 222.9 C777.6 224.6 780.8 226.8 783.4 226.2 C786.0 225.7 787.4 219.8 790.0 219.6 C792.6 219.5 795.9 223.5 798.8 225.1 C801.7 226.8 805.4 227.7 807.6 229.5 C809.8 231.4 810.9 234.3 812.0 236.1 C813.1 238.0 810.5 239.2 814.2 240.5 C817.8 241.8 829.2 242.3 833.9 243.8 C838.7 245.3 838.7 247.7 842.7 249.3 C846.7 250.9 855.2 252.2 858.1 253.7 C861.0 255.2 860.6 255.2 860.3 258.1 C859.9 261.0 858.4 268.3 855.9 271.3 C853.3 274.2 846.4 274.2 844.9 275.7 C843.4 277.1 844.2 278.6 847.1 280.0 C850.0 281.5 857.7 283.0 862.5 284.4 C867.2 285.9 873.3 287.4 875.7 288.8 C878.0 290.3 877.8 292.1 876.8 293.2 C875.7 294.3 874.7 294.9 869.1 295.4 C863.4 296.0 849.3 295.8 842.7 296.5 C836.1 297.2 834.7 298.5 829.5 299.8 C824.4 301.1 818.6 303.7 812.0 304.2 C805.4 304.8 793.7 303.3 790.0 303.1 M854.8 372.3 C854.1 370.8 849.5 366.1 850.4 363.5 C851.3 360.9 857.4 358.7 860.3 356.9 C863.2 355.1 861.4 353.1 868.0 352.5 C874.6 352.0 889.0 350.7 899.8 353.6 C910.6 356.5 925.4 367.5 932.8 370.1 C940.1 372.7 939.3 370.6 943.7 369.0 C948.1 367.3 956.5 361.7 959.1 360.2 M899.8 341.5 L902.0 352.5 M932.8 353.6 C937.1 352.7 954.7 350.1 959.1 348.1 C963.5 346.1 959.1 342.6 959.1 341.5 M917.4 376.7 C917.9 379.8 921.4 382.0 920.7 395.5 C919.9 409.1 913.5 444.4 913.0 458.1 C912.4 471.8 916.6 474.6 917.4 477.8 M810.9 365.7 C811.8 369.8 814.0 383.1 816.4 390.0 C818.7 397.0 822.2 403.2 825.1 407.6 C828.1 412.0 826.6 410.9 833.9 416.4 C841.2 421.8 857.4 433.6 869.1 440.5 C880.8 447.5 895.4 454.8 904.2 458.1 C913.0 461.4 917.0 460.6 921.8 460.3 C926.5 459.9 926.9 462.5 932.8 455.9 C938.6 449.3 952.5 431.7 956.9 420.7 C961.3 409.8 958.7 395.1 959.1 390.0 M825.1 376.7 L820.7 390.1 M260.3 541.1 C265.0 541.9 280.4 544.9 288.8 545.9 C297.2 546.9 304.6 547.0 310.8 547.0 C317.0 547.0 318.8 547.6 326.2 545.9 C333.5 544.3 344.5 540.1 354.7 537.1 C365.0 534.2 373.0 532.0 387.7 528.4 C402.3 524.7 430.1 521.4 442.6 515.2 C455.0 509.0 454.4 495.1 462.3 491.0 C470.2 487.0 483.2 492.1 490.0 491.0 C496.8 489.9 499.2 486.7 503.2 484.5 C507.1 482.4 509.3 479.0 513.7 477.9 C518.1 476.9 524.7 477.3 529.5 477.9 C534.3 478.6 540.5 481.2 542.7 481.9 M790.0 453.7 C792.9 456.3 801.0 466.0 807.6 469.1 C814.2 472.2 825.9 471.8 829.5 472.4 M917.4 409.8 L956.9 420.7 M934.9 458.1 C936.0 462.8 938.2 481.9 941.5 486.6 C944.8 491.4 952.5 486.6 954.7 486.6 M906.4 495.4 C901.6 498.3 888.1 508.6 877.8 513.0 C867.6 517.4 850.4 520.3 844.9 521.8 M790.0 440.5 C791.5 438.3 795.1 431.0 798.8 427.3 C802.4 423.7 810.5 421.5 812.0 418.6 C813.4 415.6 807.6 414.5 807.6 409.8 C807.6 405.0 811.2 393.3 812.0 390.0 M363.5 702.5 C369.7 698.9 390.6 688.6 400.8 680.6 C411.1 672.5 415.5 665.5 425.0 654.2 C434.5 642.9 447.1 625.1 457.9 612.5 C468.8 599.8 480.3 588.3 490.0 578.4 C499.7 568.6 510.3 558.7 516.4 553.2 C522.4 547.7 523.3 544.0 526.2 545.5 C529.2 547.0 532.8 556.8 533.9 562.0 C535.0 567.1 533.2 568.9 532.8 576.2 C532.5 583.6 533.4 597.3 531.7 605.9 C530.1 614.5 525.1 622.4 522.9 627.8 C520.7 633.3 517.8 634.4 518.6 638.8 C519.3 643.2 524.4 653.1 527.3 654.2 C530.3 655.3 534.3 650.5 536.1 645.4 C538.0 640.3 536.1 628.6 538.3 623.5 C540.5 618.3 546.0 615.8 549.3 614.7 C552.6 613.6 555.5 614.3 558.1 616.9 C560.6 619.4 560.6 627.7 564.7 630.0 C568.7 632.4 574.2 630.4 582.2 631.1 C590.3 631.9 605.7 633.2 613.0 634.4 C620.3 635.7 621.8 637.4 626.2 638.8 C630.6 640.3 630.9 650.9 639.3 643.2 C647.8 635.5 669.4 604.8 676.7 592.7 C684.0 580.6 678.1 577.0 683.3 570.7 C688.4 564.5 701.6 557.8 707.4 555.4 C713.3 553.0 716.6 556.3 718.4 556.5 M425.0 654.2 C425.4 657.5 425.4 667.4 427.2 674.0 C429.0 680.6 434.5 690.4 436.0 693.7 M532.8 576.2 C534.5 576.8 540.3 577.2 542.7 579.5 C545.1 581.9 543.1 588.7 547.1 590.5 C551.1 592.3 563.2 589.0 566.9 590.5 C570.5 592.0 570.9 595.6 569.1 599.3 C567.2 603.0 556.6 609.2 555.9 612.5 C555.2 615.8 563.2 616.1 564.7 619.1 C566.1 622.0 564.7 628.2 564.7 630.0 M654.7 570.7 C656.2 572.9 659.8 580.6 663.5 583.9 C667.2 587.2 674.5 589.4 676.7 590.5 M667.9 571.8 L683.3 567.5 M639.3 645.4 C634.6 650.2 611.9 669.6 610.8 674.0 C609.7 678.4 627.3 671.2 632.8 671.8 C638.2 672.3 641.2 676.5 643.7 677.3 C646.3 678.0 640.1 678.7 648.1 676.2 C656.2 673.6 679.1 659.3 692.1 661.9 C705.0 664.5 716.6 687.7 726.1 691.5 C735.6 695.4 744.6 688.2 749.2 684.9 C753.7 681.7 753.7 676.2 753.5 671.8 C753.4 667.4 746.2 665.9 748.1 658.6 C749.9 651.3 761.8 634.4 764.5 627.8 C767.3 621.3 767.1 623.8 764.5 619.1 C762.0 614.3 753.5 604.8 749.2 599.3 C744.8 593.8 741.5 590.5 738.2 586.1 C734.9 581.7 729.4 577.0 729.4 572.9 C729.4 568.9 736.0 565.3 738.2 562.0 C740.4 558.7 741.1 556.8 742.6 553.2 C744.0 549.5 743.7 543.7 747.0 540.0 C750.3 536.3 759.8 532.7 762.3 531.2 M630.6 671.8 C632.8 670.3 641.9 667.0 643.7 663.0 C645.6 659.0 644.5 653.5 641.5 647.6 C638.6 641.8 630.2 630.0 626.2 627.8 C622.1 625.7 618.8 633.3 617.4 634.4 M807.6 699.2 C810.5 697.9 820.7 692.5 825.1 691.5 C829.5 690.6 831.4 693.8 833.9 693.7 C836.5 693.7 837.6 690.9 840.5 691.1 C843.4 691.3 848.6 694.6 851.5 694.8 C854.4 695.1 853.7 697.2 858.1 692.6 C862.5 688.1 870.9 676.7 877.8 667.4 C884.8 658.0 893.2 646.5 899.8 636.6 C906.4 626.8 911.5 618.7 917.4 608.1 C923.2 597.5 931.7 581.4 934.9 572.9 C938.2 564.5 935.1 563.1 937.1 557.6 C939.2 552.1 944.5 544.8 947.0 540.0 C949.6 535.2 951.6 530.8 952.5 529.0 M512.4 540.0 C513.5 535.8 516.1 522.5 519.0 514.8 C521.8 507.1 526.0 499.7 529.5 493.8 C533.0 487.8 536.3 483.7 540.0 479.3 C543.8 474.9 548.2 471.1 551.9 467.4 C555.6 463.7 558.5 460.2 562.4 456.9 C566.4 453.6 571.2 450.3 575.6 447.7 C580.0 445.0 584.4 443.3 588.8 441.1 C593.2 438.9 596.5 436.7 601.9 434.5 C607.4 432.3 615.4 429.7 621.7 427.9 C628.0 426.1 637.0 424.6 640.0 424.0 M526.9 540.0 C527.5 535.8 529.1 522.5 530.8 514.8 C532.6 507.1 534.8 500.1 537.4 493.8 C540.0 487.4 543.3 481.5 546.6 476.6 C549.9 471.8 553.4 468.5 557.2 464.8 C560.9 461.0 564.8 457.1 569.0 454.2 C573.2 451.4 580.0 448.8 582.2 447.7 M504.5 506.9 C505.4 504.7 508.0 497.5 509.8 493.8 C511.5 490.0 514.4 484.1 515.0 484.5 C515.7 485.0 513.9 494.4 513.7 496.4 M621.8 430.6 C627.3 429.0 644.5 422.8 654.7 420.7 C665.0 418.7 674.1 418.6 683.3 418.6 C692.4 418.6 701.6 419.5 709.6 420.7 C717.7 422.0 722.4 423.5 731.6 426.2 C740.7 429.0 754.8 434.0 764.5 437.2 C774.3 440.4 778.4 442.3 790.0 445.5 C801.6 448.6 819.3 451.6 833.9 455.9 C848.6 460.2 864.7 466.9 877.8 471.3 C891.0 475.7 901.1 476.1 913.0 482.2 C924.9 488.4 944.8 500.7 949.2 508.0 C953.6 515.4 941.7 518.8 939.3 526.2 C937.0 533.6 935.7 545.2 934.9 552.5 C934.2 559.8 936.4 563.8 934.9 570.1 C933.5 576.3 927.6 586.7 926.2 590.1 M685.5 420.7 C683.6 422.6 676.7 427.7 674.5 431.7 C672.3 435.8 670.8 439.8 672.3 444.9 C673.7 450.0 677.0 454.8 683.3 462.5 C689.5 470.2 704.3 485.2 709.6 491.0 C714.9 496.9 716.4 494.3 715.1 497.6 C713.8 500.9 703.8 506.8 701.9 510.8 C700.1 514.8 701.2 518.7 704.1 521.8 C707.1 524.9 716.9 528.2 719.5 529.5 M719.5 504.2 C727.0 508.6 760.3 524.7 764.5 530.6 C768.7 536.4 752.4 535.7 744.8 539.3 C737.1 543.0 722.6 548.7 718.4 552.5 C714.2 556.4 719.3 560.8 719.5 562.4 M764.5 390.0 C764.9 392.2 764.9 399.5 766.7 403.2 C768.6 406.8 775.5 406.1 775.5 412.0 C775.5 417.8 768.2 433.9 766.7 438.3 M613.0 473.5 C614.5 475.3 617.4 481.9 621.8 484.4 C626.2 487.0 634.6 486.5 639.3 488.8 C644.1 491.2 648.5 497.1 650.3 498.7 M490.0 422.9 C493.7 423.3 504.6 423.3 512.0 425.1 C519.3 427.0 526.6 431.4 533.9 433.9 C541.2 436.5 552.2 439.4 555.9 440.5 M518.6 414.2 C517.5 416.0 514.2 421.8 512.0 425.1 C509.8 428.4 506.5 432.5 505.4 433.9 M654.7 416.4 C655.1 414.9 655.8 409.8 656.9 407.6 C658.0 405.4 660.6 403.9 661.3 403.2 M500.0 362.6 C503.0 362.8 517.3 360.7 517.8 363.4 C518.4 366.1 507.1 374.4 503.2 378.9 C499.3 383.3 494.8 386.8 494.4 390.1 C494.0 393.4 500.6 394.4 501.0 398.8 C501.3 403.2 498.4 411.4 496.6 416.4 C494.8 421.3 487.4 427.5 490.0 428.7 C492.6 430.0 505.1 425.0 512.4 424.0 C519.6 422.9 529.9 422.9 533.5 422.6 M513.2 360.0 C514.3 360.9 516.7 361.3 519.8 365.3 C522.8 369.2 527.9 380.2 531.6 383.7 C535.4 387.2 538.9 386.1 542.2 386.4 C545.5 386.6 549.2 384.8 551.4 385.0 C553.6 385.3 554.7 387.2 555.3 387.7 M602.8 360.0 C603.9 361.3 607.6 365.9 609.4 367.9 C611.1 369.9 612.7 371.2 613.3 371.9 M621.2 360.0 C621.7 361.3 623.0 365.3 623.9 367.9 C624.7 370.5 626.1 374.5 626.5 375.8 M680.0 420.6 C675.9 419.7 661.3 415.3 655.5 415.3 C649.6 415.3 648.5 419.1 644.9 420.6 C641.4 422.2 636.2 423.9 634.4 424.6 M671.3 431.2 C671.7 432.9 672.5 438.4 673.9 441.7 C675.4 445.0 679.0 449.4 680.0 450.9" fill="none" stroke="#f7e697" stroke-width="3.2" stroke-linejoin="round" stroke-linecap="round"/>
<path d="M237.9 208.7 C237.7 209.4 236.5 210.5 236.8 213.1 C237.0 215.6 236.2 221.7 239.4 224.0 C242.6 226.4 251.5 225.7 255.9 227.3 C260.3 229.0 262.1 231.9 265.8 233.9 C269.4 235.9 274.2 238.5 277.8 239.4 C281.5 240.3 285.7 238.5 287.7 239.4 C289.7 240.3 289.0 242.9 289.9 244.9 C290.8 246.9 291.2 249.8 293.2 251.5 C295.2 253.1 299.1 254.6 302.0 254.8 C304.9 255.0 310.1 253.9 310.8 252.6 C311.5 251.3 306.9 248.9 306.4 247.1 C305.9 245.3 305.7 243.0 307.5 241.6 C309.3 240.2 311.3 239.2 317.4 238.8 C323.4 238.3 335.7 238.3 343.7 238.8 C351.8 239.2 360.6 240.6 365.7 241.6 C370.8 242.6 372.5 244.9 374.5 244.9 C376.5 244.9 376.7 241.4 377.8 241.6 C378.9 241.8 377.6 244.5 381.1 246.0 C384.5 247.5 393.9 249.8 398.6 250.4 C403.4 250.9 407.2 250.0 409.6 249.3 C412.0 248.6 411.6 246.0 412.9 246.0 C414.2 246.0 413.1 248.4 417.3 249.3 C421.5 250.2 432.1 249.7 438.2 251.5 C444.2 253.3 451.0 257.9 453.5 260.3 C456.1 262.7 451.7 263.2 453.5 265.8 C455.4 268.3 462.0 274.7 464.5 275.7 C467.1 276.6 464.7 271.9 468.9 271.3 C473.2 270.6 483.9 271.8 490.0 271.8 C496.1 271.8 499.9 269.7 505.4 271.3 C510.9 272.8 518.2 277.8 522.9 281.1 C527.7 284.4 529.5 288.6 533.9 291.0 C538.3 293.4 545.6 293.2 549.3 295.4 C553.0 297.6 553.5 302.6 555.9 304.2 C558.3 305.9 560.8 306.9 563.6 305.3 C566.3 303.7 570.5 295.2 572.4 294.3 C574.2 293.4 574.7 296.3 574.6 299.8 C574.4 303.3 573.1 310.8 571.3 315.2 C569.4 319.6 565.0 323.4 563.6 326.2 C562.1 328.9 561.2 330.0 562.5 331.7 C563.8 333.3 568.3 335.5 571.3 336.0 C574.2 336.6 577.5 336.4 580.0 334.9 C582.6 333.5 585.2 330.6 586.6 327.3 C588.1 324.0 587.5 319.2 588.8 315.2 C590.1 311.2 591.4 304.9 594.3 303.1 C597.2 301.3 602.0 304.9 606.4 304.2 C610.8 303.5 618.5 300.5 620.7 298.7 C622.9 296.9 620.7 295.6 619.6 293.2 C618.5 290.8 615.7 287.0 614.1 284.4 C612.4 281.9 609.1 280.8 609.7 277.8 C610.2 274.9 616.1 268.7 617.4 266.9 M207.1 304.6 C207.9 305.1 206.8 305.7 212.0 307.5 C217.2 309.3 231.0 314.3 238.3 315.6 C245.6 317.0 249.3 313.7 255.9 315.6 C262.5 317.6 271.6 324.0 277.8 327.3 C284.1 330.6 288.8 333.7 293.2 335.4 C297.6 337.1 298.7 334.7 304.2 337.6 C309.7 340.4 319.6 348.2 326.2 352.5 C332.8 356.8 338.6 361.3 343.7 363.5 C348.9 365.7 352.2 363.9 356.9 365.7 C361.7 367.5 367.2 371.7 372.3 374.5 C377.4 377.2 378.7 379.0 387.7 382.2 C396.6 385.3 414.7 389.2 426.1 393.2 C437.4 397.3 448.2 401.9 455.7 406.5 C463.2 411.1 466.0 416.9 471.1 420.7 C476.2 424.6 483.3 427.9 486.5 429.5 C489.6 431.2 489.8 428.1 490.0 430.6 C490.2 433.2 488.0 440.0 487.6 444.9 C487.2 449.8 487.2 457.3 487.6 460.3 C488.0 463.3 487.8 461.1 490.0 462.7 C492.2 464.4 496.8 467.3 500.5 470.0 C504.3 472.8 508.4 475.3 512.4 479.3 C516.3 483.2 520.7 489.4 524.2 493.8 C527.8 498.1 531.9 503.6 533.5 505.6 M483.2 292.8 C484.3 292.9 486.7 292.9 490.0 293.7 C493.3 294.5 499.9 294.8 503.2 297.6 C506.5 300.5 508.5 304.9 509.8 310.8 C511.0 316.6 510.1 325.1 510.9 332.8 C511.6 340.4 512.1 350.7 514.2 356.9 C516.2 363.1 519.6 365.7 522.9 370.1 C526.2 374.5 530.6 380.5 533.9 383.3 C537.2 386.0 540.0 386.1 542.7 386.6 C545.5 387.0 546.4 389.9 550.4 386.0 C554.4 382.2 559.7 368.2 566.9 363.5 C574.0 358.8 586.3 358.0 593.2 358.0 C600.2 358.0 605.3 361.1 608.6 363.5 C611.9 365.9 612.3 370.8 613.0 372.3 M586.6 315.2 L614.1 316.3 M599.8 309.7 C602.0 311.0 609.3 314.3 613.0 317.4 C616.6 320.5 621.0 324.7 621.8 328.4 C622.5 332.0 616.3 336.4 617.4 339.3 C618.5 342.3 626.2 347.4 628.4 345.9 C630.6 344.5 628.0 335.1 630.6 330.6 C633.1 326.0 640.8 321.4 643.7 318.5 C646.7 315.5 646.7 315.4 648.1 313.0 C649.6 310.6 650.3 308.8 652.5 304.2 C654.7 299.6 659.8 288.6 661.3 285.5 M643.7 315.2 C646.7 314.6 656.9 313.7 661.3 311.9 C665.7 310.1 667.9 305.5 670.1 304.2 C672.3 302.9 674.1 307.1 674.5 304.2 C674.8 301.3 671.2 290.7 672.3 286.6 C673.4 282.6 674.8 281.3 681.1 280.0 C687.3 278.8 699.4 279.1 709.6 278.9 C719.9 278.8 734.5 277.7 742.6 278.9 C750.6 280.2 750.0 284.8 757.9 286.6 C765.8 288.5 783.2 288.1 790.0 289.9 C796.8 291.8 795.9 295.2 798.8 297.6 C801.7 300.0 805.7 302.7 807.6 304.2 C809.4 305.7 809.4 306.0 809.8 306.4 M676.7 303.1 C678.5 305.1 685.1 311.2 687.7 315.2 C690.2 319.2 690.2 327.3 692.1 327.3 C693.9 327.3 695.7 317.9 698.6 315.2 C701.6 312.4 702.3 311.2 709.6 310.8 C716.9 310.4 734.1 313.2 742.6 313.0 C751.0 312.8 756.8 312.1 760.1 309.7 C763.4 307.3 759.8 300.0 762.3 298.7 C764.9 297.4 770.9 301.3 775.5 302.0 C780.1 302.7 787.6 302.9 790.0 303.1 M648.1 315.2 C648.9 317.4 651.1 325.4 652.5 328.4 C654.0 331.3 656.9 330.2 656.9 332.8 C656.9 335.3 653.6 339.0 652.5 343.7 C651.4 348.5 649.6 358.0 650.3 361.3 C651.1 364.6 652.5 361.7 656.9 363.5 C661.3 365.3 673.2 369.4 676.7 372.3 C680.2 375.2 678.3 379.1 677.8 381.1 C677.3 383.1 673.8 386.0 673.5 384.3 C673.3 382.5 675.5 373.3 676.6 370.5 C677.6 367.8 679.4 368.3 680.0 367.9 M571.3 361.3 C571.6 358.0 572.4 346.7 573.5 341.5 C574.6 336.4 577.1 332.4 577.8 330.6 M654.7 353.6 C660.2 353.1 678.9 351.4 687.7 350.3 C696.4 349.2 701.9 345.9 707.4 347.0 C712.9 348.1 716.6 353.8 720.6 356.9 C724.6 360.0 729.4 361.7 731.6 365.7 C733.8 369.7 733.4 377.0 733.8 381.1 C734.1 385.1 734.9 385.6 733.8 390.0 C732.7 394.5 729.2 401.7 727.2 407.6 C725.2 413.4 722.6 422.2 721.7 425.1 M687.7 351.4 C687.3 352.7 685.3 356.9 685.5 359.1 C685.6 361.3 688.2 363.7 688.8 364.6 M747.0 376.7 L762.3 372.3 M747.0 372.3 C746.2 374.1 743.7 380.3 742.6 383.3 C741.5 386.2 740.7 388.9 740.4 390.1 M619.6 353.6 C620.3 355.6 622.9 361.9 624.0 365.7 C625.1 369.5 625.8 374.8 626.2 376.7 M730.7 208.7 C733.3 209.0 742.0 209.9 746.1 210.9 C750.1 211.8 751.6 213.2 754.9 214.2 C758.2 215.1 762.5 214.9 765.8 216.4 C769.1 217.8 771.7 221.3 774.6 222.9 C777.6 224.6 780.8 226.8 783.4 226.2 C786.0 225.7 787.4 219.8 790.0 219.6 C792.6 219.5 795.9 223.5 798.8 225.1 C801.7 226.8 805.4 227.7 807.6 229.5 C809.8 231.4 810.9 234.3 812.0 236.1 C813.1 238.0 810.5 239.2 814.2 240.5 C817.8 241.8 829.2 242.3 833.9 243.8 C838.7 245.3 838.7 247.7 842.7 249.3 C846.7 250.9 855.2 252.2 858.1 253.7 C861.0 255.2 860.6 255.2 860.3 258.1 C859.9 261.0 858.4 268.3 855.9 271.3 C853.3 274.2 846.4 274.2 844.9 275.7 C843.4 277.1 844.2 278.6 847.1 280.0 C850.0 281.5 857.7 283.0 862.5 284.4 C867.2 285.9 873.3 287.4 875.7 288.8 C878.0 290.3 877.8 292.1 876.8 293.2 C875.7 294.3 874.7 294.9 869.1 295.4 C863.4 296.0 849.3 295.8 842.7 296.5 C836.1 297.2 834.7 298.5 829.5 299.8 C824.4 301.1 818.6 303.7 812.0 304.2 C805.4 304.8 793.7 303.3 790.0 303.1 M854.8 372.3 C854.1 370.8 849.5 366.1 850.4 363.5 C851.3 360.9 857.4 358.7 860.3 356.9 C863.2 355.1 861.4 353.1 868.0 352.5 C874.6 352.0 889.0 350.7 899.8 353.6 C910.6 356.5 925.4 367.5 932.8 370.1 C940.1 372.7 939.3 370.6 943.7 369.0 C948.1 367.3 956.5 361.7 959.1 360.2 M899.8 341.5 L902.0 352.5 M932.8 353.6 C937.1 352.7 954.7 350.1 959.1 348.1 C963.5 346.1 959.1 342.6 959.1 341.5 M917.4 376.7 C917.9 379.8 921.4 382.0 920.7 395.5 C919.9 409.1 913.5 444.4 913.0 458.1 C912.4 471.8 916.6 474.6 917.4 477.8 M810.9 365.7 C811.8 369.8 814.0 383.1 816.4 390.0 C818.7 397.0 822.2 403.2 825.1 407.6 C828.1 412.0 826.6 410.9 833.9 416.4 C841.2 421.8 857.4 433.6 869.1 440.5 C880.8 447.5 895.4 454.8 904.2 458.1 C913.0 461.4 917.0 460.6 921.8 460.3 C926.5 459.9 926.9 462.5 932.8 455.9 C938.6 449.3 952.5 431.7 956.9 420.7 C961.3 409.8 958.7 395.1 959.1 390.0 M825.1 376.7 L820.7 390.1 M260.3 541.1 C265.0 541.9 280.4 544.9 288.8 545.9 C297.2 546.9 304.6 547.0 310.8 547.0 C317.0 547.0 318.8 547.6 326.2 545.9 C333.5 544.3 344.5 540.1 354.7 537.1 C365.0 534.2 373.0 532.0 387.7 528.4 C402.3 524.7 430.1 521.4 442.6 515.2 C455.0 509.0 454.4 495.1 462.3 491.0 C470.2 487.0 483.2 492.1 490.0 491.0 C496.8 489.9 499.2 486.7 503.2 484.5 C507.1 482.4 509.3 479.0 513.7 477.9 C518.1 476.9 524.7 477.3 529.5 477.9 C534.3 478.6 540.5 481.2 542.7 481.9 M790.0 453.7 C792.9 456.3 801.0 466.0 807.6 469.1 C814.2 472.2 825.9 471.8 829.5 472.4 M917.4 409.8 L956.9 420.7 M934.9 458.1 C936.0 462.8 938.2 481.9 941.5 486.6 C944.8 491.4 952.5 486.6 954.7 486.6 M906.4 495.4 C901.6 498.3 888.1 508.6 877.8 513.0 C867.6 517.4 850.4 520.3 844.9 521.8 M790.0 440.5 C791.5 438.3 795.1 431.0 798.8 427.3 C802.4 423.7 810.5 421.5 812.0 418.6 C813.4 415.6 807.6 414.5 807.6 409.8 C807.6 405.0 811.2 393.3 812.0 390.0 M363.5 702.5 C369.7 698.9 390.6 688.6 400.8 680.6 C411.1 672.5 415.5 665.5 425.0 654.2 C434.5 642.9 447.1 625.1 457.9 612.5 C468.8 599.8 480.3 588.3 490.0 578.4 C499.7 568.6 510.3 558.7 516.4 553.2 C522.4 547.7 523.3 544.0 526.2 545.5 C529.2 547.0 532.8 556.8 533.9 562.0 C535.0 567.1 533.2 568.9 532.8 576.2 C532.5 583.6 533.4 597.3 531.7 605.9 C530.1 614.5 525.1 622.4 522.9 627.8 C520.7 633.3 517.8 634.4 518.6 638.8 C519.3 643.2 524.4 653.1 527.3 654.2 C530.3 655.3 534.3 650.5 536.1 645.4 C538.0 640.3 536.1 628.6 538.3 623.5 C540.5 618.3 546.0 615.8 549.3 614.7 C552.6 613.6 555.5 614.3 558.1 616.9 C560.6 619.4 560.6 627.7 564.7 630.0 C568.7 632.4 574.2 630.4 582.2 631.1 C590.3 631.9 605.7 633.2 613.0 634.4 C620.3 635.7 621.8 637.4 626.2 638.8 C630.6 640.3 630.9 650.9 639.3 643.2 C647.8 635.5 669.4 604.8 676.7 592.7 C684.0 580.6 678.1 577.0 683.3 570.7 C688.4 564.5 701.6 557.8 707.4 555.4 C713.3 553.0 716.6 556.3 718.4 556.5 M425.0 654.2 C425.4 657.5 425.4 667.4 427.2 674.0 C429.0 680.6 434.5 690.4 436.0 693.7 M532.8 576.2 C534.5 576.8 540.3 577.2 542.7 579.5 C545.1 581.9 543.1 588.7 547.1 590.5 C551.1 592.3 563.2 589.0 566.9 590.5 C570.5 592.0 570.9 595.6 569.1 599.3 C567.2 603.0 556.6 609.2 555.9 612.5 C555.2 615.8 563.2 616.1 564.7 619.1 C566.1 622.0 564.7 628.2 564.7 630.0 M654.7 570.7 C656.2 572.9 659.8 580.6 663.5 583.9 C667.2 587.2 674.5 589.4 676.7 590.5 M667.9 571.8 L683.3 567.5 M639.3 645.4 C634.6 650.2 611.9 669.6 610.8 674.0 C609.7 678.4 627.3 671.2 632.8 671.8 C638.2 672.3 641.2 676.5 643.7 677.3 C646.3 678.0 640.1 678.7 648.1 676.2 C656.2 673.6 679.1 659.3 692.1 661.9 C705.0 664.5 716.6 687.7 726.1 691.5 C735.6 695.4 744.6 688.2 749.2 684.9 C753.7 681.7 753.7 676.2 753.5 671.8 C753.4 667.4 746.2 665.9 748.1 658.6 C749.9 651.3 761.8 634.4 764.5 627.8 C767.3 621.3 767.1 623.8 764.5 619.1 C762.0 614.3 753.5 604.8 749.2 599.3 C744.8 593.8 741.5 590.5 738.2 586.1 C734.9 581.7 729.4 577.0 729.4 572.9 C729.4 568.9 736.0 565.3 738.2 562.0 C740.4 558.7 741.1 556.8 742.6 553.2 C744.0 549.5 743.7 543.7 747.0 540.0 C750.3 536.3 759.8 532.7 762.3 531.2 M630.6 671.8 C632.8 670.3 641.9 667.0 643.7 663.0 C645.6 659.0 644.5 653.5 641.5 647.6 C638.6 641.8 630.2 630.0 626.2 627.8 C622.1 625.7 618.8 633.3 617.4 634.4 M807.6 699.2 C810.5 697.9 820.7 692.5 825.1 691.5 C829.5 690.6 831.4 693.8 833.9 693.7 C836.5 693.7 837.6 690.9 840.5 691.1 C843.4 691.3 848.6 694.6 851.5 694.8 C854.4 695.1 853.7 697.2 858.1 692.6 C862.5 688.1 870.9 676.7 877.8 667.4 C884.8 658.0 893.2 646.5 899.8 636.6 C906.4 626.8 911.5 618.7 917.4 608.1 C923.2 597.5 931.7 581.4 934.9 572.9 C938.2 564.5 935.1 563.1 937.1 557.6 C939.2 552.1 944.5 544.8 947.0 540.0 C949.6 535.2 951.6 530.8 952.5 529.0 M512.4 540.0 C513.5 535.8 516.1 522.5 519.0 514.8 C521.8 507.1 526.0 499.7 529.5 493.8 C533.0 487.8 536.3 483.7 540.0 479.3 C543.8 474.9 548.2 471.1 551.9 467.4 C555.6 463.7 558.5 460.2 562.4 456.9 C566.4 453.6 571.2 450.3 575.6 447.7 C580.0 445.0 584.4 443.3 588.8 441.1 C593.2 438.9 596.5 436.7 601.9 434.5 C607.4 432.3 615.4 429.7 621.7 427.9 C628.0 426.1 637.0 424.6 640.0 424.0 M526.9 540.0 C527.5 535.8 529.1 522.5 530.8 514.8 C532.6 507.1 534.8 500.1 537.4 493.8 C540.0 487.4 543.3 481.5 546.6 476.6 C549.9 471.8 553.4 468.5 557.2 464.8 C560.9 461.0 564.8 457.1 569.0 454.2 C573.2 451.4 580.0 448.8 582.2 447.7 M504.5 506.9 C505.4 504.7 508.0 497.5 509.8 493.8 C511.5 490.0 514.4 484.1 515.0 484.5 C515.7 485.0 513.9 494.4 513.7 496.4 M621.8 430.6 C627.3 429.0 644.5 422.8 654.7 420.7 C665.0 418.7 674.1 418.6 683.3 418.6 C692.4 418.6 701.6 419.5 709.6 420.7 C717.7 422.0 722.4 423.5 731.6 426.2 C740.7 429.0 754.8 434.0 764.5 437.2 C774.3 440.4 778.4 442.3 790.0 445.5 C801.6 448.6 819.3 451.6 833.9 455.9 C848.6 460.2 864.7 466.9 877.8 471.3 C891.0 475.7 901.1 476.1 913.0 482.2 C924.9 488.4 944.8 500.7 949.2 508.0 C953.6 515.4 941.7 518.8 939.3 526.2 C937.0 533.6 935.7 545.2 934.9 552.5 C934.2 559.8 936.4 563.8 934.9 570.1 C933.5 576.3 927.6 586.7 926.2 590.1 M685.5 420.7 C683.6 422.6 676.7 427.7 674.5 431.7 C672.3 435.8 670.8 439.8 672.3 444.9 C673.7 450.0 677.0 454.8 683.3 462.5 C689.5 470.2 704.3 485.2 709.6 491.0 C714.9 496.9 716.4 494.3 715.1 497.6 C713.8 500.9 703.8 506.8 701.9 510.8 C700.1 514.8 701.2 518.7 704.1 521.8 C707.1 524.9 716.9 528.2 719.5 529.5 M719.5 504.2 C727.0 508.6 760.3 524.7 764.5 530.6 C768.7 536.4 752.4 535.7 744.8 539.3 C737.1 543.0 722.6 548.7 718.4 552.5 C714.2 556.4 719.3 560.8 719.5 562.4 M764.5 390.0 C764.9 392.2 764.9 399.5 766.7 403.2 C768.6 406.8 775.5 406.1 775.5 412.0 C775.5 417.8 768.2 433.9 766.7 438.3 M613.0 473.5 C614.5 475.3 617.4 481.9 621.8 484.4 C626.2 487.0 634.6 486.5 639.3 488.8 C644.1 491.2 648.5 497.1 650.3 498.7 M490.0 422.9 C493.7 423.3 504.6 423.3 512.0 425.1 C519.3 427.0 526.6 431.4 533.9 433.9 C541.2 436.5 552.2 439.4 555.9 440.5 M518.6 414.2 C517.5 416.0 514.2 421.8 512.0 425.1 C509.8 428.4 506.5 432.5 505.4 433.9 M654.7 416.4 C655.1 414.9 655.8 409.8 656.9 407.6 C658.0 405.4 660.6 403.9 661.3 403.2 M500.0 362.6 C503.0 362.8 517.3 360.7 517.8 363.4 C518.4 366.1 507.1 374.4 503.2 378.9 C499.3 383.3 494.8 386.8 494.4 390.1 C494.0 393.4 500.6 394.4 501.0 398.8 C501.3 403.2 498.4 411.4 496.6 416.4 C494.8 421.3 487.4 427.5 490.0 428.7 C492.6 430.0 505.1 425.0 512.4 424.0 C519.6 422.9 529.9 422.9 533.5 422.6 M513.2 360.0 C514.3 360.9 516.7 361.3 519.8 365.3 C522.8 369.2 527.9 380.2 531.6 383.7 C535.4 387.2 538.9 386.1 542.2 386.4 C545.5 386.6 549.2 384.8 551.4 385.0 C553.6 385.3 554.7 387.2 555.3 387.7 M602.8 360.0 C603.9 361.3 607.6 365.9 609.4 367.9 C611.1 369.9 612.7 371.2 613.3 371.9 M621.2 360.0 C621.7 361.3 623.0 365.3 623.9 367.9 C624.7 370.5 626.1 374.5 626.5 375.8 M680.0 420.6 C675.9 419.7 661.3 415.3 655.5 415.3 C649.6 415.3 648.5 419.1 644.9 420.6 C641.4 422.2 636.2 423.9 634.4 424.6 M671.3 431.2 C671.7 432.9 672.5 438.4 673.9 441.7 C675.4 445.0 679.0 449.4 680.0 450.9" fill="none" stroke="#b9b8b8" stroke-width="1.5" stroke-dasharray="1.5 1.5" stroke-linejoin="round"/>
<path d="M883.0 343.0 L886.0 341.5 L888.5 343.5 L887.0 346.5 L884.0 346.5 Z" fill="url(#wpat)" stroke="#10207a" stroke-width="1"/>
<path d="M942.0 363.0 L945.0 362.5 L945.5 366.0 L943.0 366.0 Z" fill="url(#wpat)" stroke="#10207a" stroke-width="1"/>
<path d="M779.0 332.0 L783.0 339.0 L782.0 343.0 L778.0 341.0 Z" fill="url(#wpat)" stroke="#10207a" stroke-width="1"/>
<path d="M705.0 344.0 L708.0 346.0 L706.0 348.0 Z" fill="url(#wpat)" stroke="#10207a" stroke-width="1"/>
<path d="M707.0 353.0 L711.0 355.0 L708.0 356.0 Z" fill="url(#wpat)" stroke="#10207a" stroke-width="1"/>
<path d="M657.0 365.0 L661.0 364.0 L660.0 368.0 Z" fill="url(#wpat)" stroke="#10207a" stroke-width="1"/>
<path d="M795.0 422.0 L804.0 416.0 L807.0 420.0 L800.0 423.0 Z" fill="url(#wpat)" stroke="#10207a" stroke-width="1"/>
<path d="M861.0 399.0 L864.0 400.0 L864.0 403.0 L861.0 403.0 Z" fill="url(#wpat)" stroke="#10207a" stroke-width="1"/>
<path d="M864.0 409.0 L867.0 411.0 L867.0 414.0 L864.0 414.0 Z" fill="url(#wpat)" stroke="#10207a" stroke-width="1"/>
<path d="M868.0 428.0 L872.0 433.0 L873.0 438.0 L869.0 437.0 Z" fill="url(#wpat)" stroke="#10207a" stroke-width="1"/>
<path d="M907.0 461.0 L915.0 463.0 L917.0 465.0 L909.0 465.0 Z" fill="url(#wpat)" stroke="#10207a" stroke-width="1"/>
<path d="M938.0 469.0 L945.0 470.0 L946.0 472.0 L939.0 472.0 Z" fill="url(#wpat)" stroke="#10207a" stroke-width="1"/>
<path d="M915.0 504.0 L918.0 505.0 L917.0 507.0 Z" fill="url(#wpat)" stroke="#10207a" stroke-width="1"/>
<path d="M898.7 366.8 L908.6 369.0 L917.4 373.4 L915.2 376.7 L904.2 377.8 L902.0 372.3 Z" fill="url(#wpat)" stroke="#10207a" stroke-width="1"/>
<path d="M714.0 405.0 L717.0 410.0 L718.0 414.0 L714.0 413.0 Z" fill="url(#wpat)" stroke="#10207a" stroke-width="1"/>
<circle cx="582" cy="409" r="4.6" fill="#4d8a4f" stroke="#fff" stroke-width="1.5"/>
<circle cx="595.5" cy="460.8" r="4.6" fill="#4d8a4f" stroke="#fff" stroke-width="1.5"/>
<circle cx="715.3" cy="496.9" r="4.6" fill="#4d8a4f" stroke="#fff" stroke-width="1.5"/>
<circle cx="719.9" cy="562.1" r="4.6" fill="#4d8a4f" stroke="#fff" stroke-width="1.5"/>
<circle cx="639.3" cy="649.8" r="4.6" fill="#4d8a4f" stroke="#fff" stroke-width="1.5"/>
<circle cx="947" cy="511.9" r="4.6" fill="#4d8a4f" stroke="#fff" stroke-width="1.5"/>
<text x="586" y="403.3" font-family="Liberation Sans" font-size="18" style="font-style:italic;" fill="#fafafa" stroke="#5e5e5e" stroke-width="2.2" paint-order="stroke" stroke-linejoin="round">Swellendam</text>
<text x="599" y="455.2" font-family="Liberation Sans" font-size="16" style="" fill="#fafafa" stroke="#5e5e5e" stroke-width="2.2" paint-order="stroke" stroke-linejoin="round">Railton</text>
<text x="718" y="492.3" font-family="Liberation Sans" font-size="13" style="" fill="#fafafa" stroke="#5e5e5e" stroke-width="2.2" paint-order="stroke" stroke-linejoin="round">Bontebok National Park Entrance Gate</text>
<text x="723" y="557.8" font-family="Liberation Sans" font-size="13" style="" fill="#fafafa" stroke="#5e5e5e" stroke-width="2.2" paint-order="stroke" stroke-linejoin="round">Bontebok National Park Reception &amp; Shop</text>
<text x="643" y="646.3" font-family="Liberation Sans" font-size="11" style="" fill="#fafafa" stroke="#5e5e5e" stroke-width="2.2" paint-order="stroke" stroke-linejoin="round">Lang Elsies Kraal Rest Camp</text>
<text x="952" y="505.3" font-family="Liberation Sans" font-size="18" style="font-style:italic;" fill="#fafafa" stroke="#5e5e5e" stroke-width="2.2" paint-order="stroke" stroke-linejoin="round">Buffeljagsrivier</text>
<rect x="1000" y="114" width="16" height="660" fill="#fff"/>
<text x="439" y="163.2" font-family="Liberation Sans" font-size="40.5" font-style="italic" fill="#000" stroke="#fff" stroke-width="0.7">Swellendam</text>
<text x="114" y="538" font-family="Liberation Sans" font-size="18" fill="#000">Legend</text>
<text x="143" y="563.8" font-family="Liberation Sans" font-size="13" fill="#000">Places</text>
<text x="143" y="589.9" font-family="Liberation Sans" font-size="13" fill="#000">Roads and Streets</text>
<text x="143" y="614.8" font-family="Liberation Sans" font-size="13" fill="#000">Surface Water</text>
<text x="143" y="640" font-family="Liberation Sans" font-size="13" fill="#000">Rivers</text>
<text x="143" y="664.8" font-family="Liberation Sans" font-size="13" fill="#000">Rural, small</text>
<text x="143" y="683.6" font-family="Liberation Sans" font-size="13" fill="#000">Rural, large</text>
<text x="143" y="702.5" font-family="Liberation Sans" font-size="13" fill="#000">Swellendam</text>
<text x="143" y="721.5" font-family="Liberation Sans" font-size="13" fill="#000">Residential</text>
<circle cx="125" cy="559" r="4" fill="#4d8a4f"/>
<path d="M113 584.3h24" stroke="#f9e88c" stroke-width="3.4"/><path d="M113 584.3h24" stroke="#bdbbb6" stroke-width="1.6" stroke-dasharray="1.6 1.5"/>
<rect x="114.5" y="603.5" width="20" height="11" fill="url(#wpat)" stroke="#10207a" stroke-width="1"/>
<path d="M114 634.6h22" stroke="#9ac4f3" stroke-width="1.3"/>
<rect x="114" y="654.4" width="21" height="10.4" fill="#daf5c9"/>
<rect x="114" y="673.3" width="21" height="10.4" fill="#84b36f"/>
<rect x="114" y="692" width="21" height="10.4" fill="#8fbfb3"/>
<rect x="114" y="711.2" width="21" height="10.4" fill="#dde9ee"/>
</svg>
<!--/MAP-->
<!-- toolbar icons -->
<svg class="a" style="left:0;top:0" width="1499" height="95" viewBox="0 0 1499 95">
<defs>
<linearGradient id="gBlue" x1="0" y1="0" x2="0" y2="1"><stop offset="0" stop-color="#7aa3d4"/><stop offset="1" stop-color="#4f7fb9"/></linearGradient>
<linearGradient id="gFold" x1="0" y1="0" x2="0" y2="1"><stop offset="0" stop-color="#f6de6a"/><stop offset="1" stop-color="#e8c33c"/></linearGradient>
<linearGradient id="gLand" x1="0" y1="0" x2="0" y2="1"><stop offset="0" stop-color="#7fb6e8"/><stop offset="0.5" stop-color="#bcd9ef"/><stop offset="0.55" stop-color="#d9c27a"/><stop offset="1" stop-color="#c7a64c"/></linearGradient>
<linearGradient id="gPress" x1="0" y1="0" x2="0" y2="1"><stop offset="0" stop-color="#a9a9a9"/><stop offset="1" stop-color="#c9c9c9"/></linearGradient>
<g id="plusG"><rect x="0" y="0" width="10" height="10" rx="2.5" fill="#4f9a4c" stroke="#3d7d3a" stroke-width="0.6"/><path d="M5 2v6M2 5h6" stroke="#fff" stroke-width="2"/></g>
<g id="expB"><rect x="0" y="0" width="11" height="11" rx="2" fill="#3f6580"/><path d="M2.5 3v5M2.5 3h2M2.5 8h2M4.5 5.5h4M7 3.5l2 2-2 2" stroke="#fff" stroke-width="1" fill="none"/></g>
<g id="grip"><circle cx="2" cy="1" r="1.2" fill="#fff"/><circle cx="4" cy="4" r="1.2" fill="#fff"/><circle cx="2" cy="7" r="1.2" fill="#fff"/><circle cx="4" cy="10" r="1.2" fill="#fff"/><circle cx="2" cy="13" r="1.2" fill="#fff"/><circle cx="4" cy="16" r="1.2" fill="#fff"/><circle cx="2" cy="19" r="1.2" fill="#fff"/><circle cx="4" cy="22" r="1.2" fill="#fff"/></g>
</defs>
<!-- grips -->
<use href="#grip" x="64" y="63" opacity="0.9"/>
<use href="#grip" x="549" y="63" opacity="0.9"/>
<use href="#grip" x="711" y="63" opacity="0.9"/>
<use href="#grip" x="1061" y="63" opacity="0.9"/>
<!-- separators -->
<line x1="109.5" y1="58" x2="109.5" y2="90" stroke="#555" stroke-width="1" stroke-dasharray="1 2"/>
<line x1="309.5" y1="58" x2="309.5" y2="90" stroke="#555" stroke-width="1" stroke-dasharray="1 2"/>
<!-- save -->
<g transform="translate(76,63)"><rect x="0.5" y="0.5" width="19" height="21" rx="2" fill="#6f9bd0" stroke="#4a75a8"/><rect x="3.5" y="1.5" width="13" height="8" fill="#f4f4f4"/><path d="M5.5 3.5h9M5.5 5.5h9M5.5 7.5h9" stroke="#444" stroke-width="1"/><rect x="4.5" y="13" width="11" height="7" fill="#eee"/><rect x="6" y="14.5" width="2" height="4" fill="#3d5f8c"/></g>
<!-- new composer -->
<g transform="translate(122,64)"><path d="M0.5 0.5h16l5 5v10h-21z" fill="#fff" stroke="#8a8a8a"/><path d="M16.5 0.5v5h5" fill="none" stroke="#8a8a8a"/><rect x="13.5" y="12.5" width="10" height="10" rx="1.5" fill="#d4aa22"/><path d="M18.5 14v7M15 17.5h7M16 15l5 5M21 15l-5 5" stroke="#fff" stroke-width="1"/></g>
<!-- duplicate composer -->
<g transform="translate(160,64)"><path d="M0.5 3.5h16v14h-16z" fill="#ddd" stroke="#8a8a8a"/><path d="M2.5 0.5h16l5 5v10h-21z" fill="#fff" stroke="#8a8a8a"/><path d="M18.5 0.5v5h5" fill="none" stroke="#8a8a8a"/><rect x="14" y="12.5" width="10" height="10" rx="1.5" fill="#d4aa22"/><path d="M19 14v7M15.5 17.5h7M16.5 15l5 5M21.5 15l-5 5" stroke="#fff" stroke-width="1"/></g>
<!-- composer manager -->
<g transform="translate(198,64)"><path d="M0.5 0.5h16l5 5v11h-21z" fill="#fff" stroke="#8a8a8a"/><path d="M16.5 0.5v5h5" fill="none" stroke="#8a8a8a"/><path d="M9 6a4 4 0 1 0 4 5l9 9" fill="none" stroke="#333" stroke-width="1.2"/><path d="M13 11l9 10" stroke="#e6c45a" stroke-width="3.4" stroke-linecap="round"/><path d="M13 11l9 10" stroke="#b08a1e" stroke-width="0.8" stroke-linecap="round" opacity="0.6"/><path d="M7 5.5a4.5 4.5 0 1 0 5.5 5.5" fill="none" stroke="#444" stroke-width="1.6"/></g>
<!-- open folder -->
<g transform="translate(236,65)"><path d="M1.5 3.5v14h19l2-10h-14l-1.5-4z" fill="url(#gFold)" stroke="#c9a52c"/><path d="M1 2h6l2 2h8v3" fill="#f2d45a" stroke="#c9a52c" stroke-width="0.8"/></g>
<!-- save as template -->
<g transform="translate(276,63)"><rect x="0.5" y="0.5" width="19" height="21" rx="2" fill="#6f9bd0" stroke="#4a75a8"/><rect x="3.5" y="1.5" width="13" height="8" fill="#f4f4f4"/><path d="M5.5 3.5h9M5.5 5.5h9M5.5 7.5h9" stroke="#444" stroke-width="1"/><rect x="4.5" y="13" width="11" height="7" fill="#eee"/><rect x="6" y="14.5" width="2" height="4" fill="#3d5f8c"/><rect x="11" y="12" width="11" height="12" rx="2.5" fill="#55a05a"/><path d="M13.5 21.5l6-7" stroke="#fff" stroke-width="2"/></g>
<!-- printer -->
<g transform="translate(323,65)"><rect x="5.5" y="0.5" width="10" height="6" fill="#fff" stroke="#999"/><rect x="0.5" y="6.5" width="20" height="9" rx="3" fill="#6e92b4" stroke="#4d6f90"/><rect x="4.5" y="11.5" width="12" height="8" fill="#fff" stroke="#999"/><path d="M7 14.5h7M7 17h7" stroke="#888" stroke-width="0.8"/></g>
<!-- export image -->
<g transform="translate(361,63)"><path d="M0.5 0.5h11l4 4v17h-15z" fill="#fff" stroke="#999"/><rect x="1" y="8" width="14" height="10" fill="url(#gLand)" stroke="#333" stroke-width="0.8"/><use href="#expB" x="12" y="12"/></g>
<!-- export svg -->
<g transform="translate(399,63)"><path d="M0.5 0.5h11l4 4v17h-15z" fill="#fff" stroke="#999"/><g stroke="#f0a020" stroke-width="1.5"><path d="M7.5 6v11M2 11.5h11M3.5 7.5l8 8M11.5 7.5l-8 8"/></g><circle cx="7.5" cy="11.5" r="2.2" fill="#f0a020"/><use href="#expB" x="12" y="12"/></g>
<!-- export pdf -->
<g transform="translate(438,63)"><path d="M0.5 0.5h11l4 4v17h-15z" fill="#fff" stroke="#999"/><path d="M6 4c1 4 3 8 7 10c-4 0-8 1-11 5c2-4 4-9 4-15z" fill="none" stroke="#c22" stroke-width="1.3"/><use href="#expB" x="11" y="12"/></g>
<!-- undo -->
<g transform="translate(477,65)"><path d="M7 0.5L0.5 6.5L7 12.5V9c5 0 8 1 8 4s-3 4-5 4h-1v3h2c4 0 7-3 7-7s-4-7-11-7z" fill="#6bb26a" stroke="#3f8a3e" stroke-width="0.8"/></g>
<!-- redo -->
<g transform="translate(515,65)" opacity="0.45"><path d="M11 0.5L17.5 6.5L11 12.5V9c-5 0-8 1-8 4s3 4 5 4h1v3h-2c-4 0-7-3-7-7s4-7 11-7z" fill="#6bb26a" stroke="#3f8a3e" stroke-width="0.8"/></g>
<!-- zoom full -->
<g transform="translate(559,63)"><path d="M1 1h7l-2 2 4 4-3 3-4-4-2 2z" fill="#4a86c4"/><path d="M23 1h-7l2 2-4 4 3 3 4-4 2 2z" fill="#4a86c4"/><path d="M23 23h-7l2-2-4-4 3-3 4 4 2-2z" fill="#4a86c4"/><rect x="0.5" y="0.5" width="23" height="23" fill="none" stroke="#4a86c4" stroke-width="1" opacity="0.5"/><circle cx="12" cy="11" r="6.5" fill="#eee" stroke="#666"/><path d="M7 16l-5.5 6.5" stroke="#222" stroke-width="3" stroke-linecap="round"/><path d="M6 17.5l-4 4.5" stroke="#f0c430" stroke-width="2.4" stroke-linecap="round"/></g>
<!-- zoom in -->
<g transform="translate(597,64)"><circle cx="14" cy="8.5" r="7.5" fill="#eef2f5" stroke="#555" stroke-width="1.2"/><path d="M14 4v9M9.5 8.5h9" stroke="#4a86c4" stroke-width="2.5"/><path d="M8.5 14.5l-7 7" stroke="#222" stroke-width="3" stroke-linecap="round"/><path d="M7 16.5l-5 5" stroke="#f0c430" stroke-width="2.4" stroke-linecap="round"/></g>
<!-- zoom out -->
<g transform="translate(635,64)"><circle cx="14" cy="8.5" r="7.5" fill="#eef2f5" stroke="#555" stroke-width="1.2"/><path d="M9.5 8.5h9" stroke="#4a86c4" stroke-width="2.5"/><path d="M8.5 14.5l-7 7" stroke="#222" stroke-width="3" stroke-linecap="round"/><path d="M7 16.5l-5 5" stroke="#f0c430" stroke-width="2.4" stroke-linecap="round"/></g>
<!-- refresh -->
<g transform="translate(674,64)"><path d="M3 9a8 8 0 0 1 14-4l2-3v8h-8l3-3a5 5 0 0 0-8 2z" fill="#4f8fd0"/><path d="M19 13a8 8 0 0 1-14 4l-2 3v-8h8l-3 3a5 5 0 0 0 8-2z" fill="#4f8fd0"/></g>
<!-- add map -->
<g transform="translate(719,64)"><path d="M3 1h15v19H3z" fill="#f4f4f4" stroke="#aaa"/><path d="M3 1c-3 0-3 3 0 3M3 20c-3 0-3-3 0-3" fill="#eee" stroke="#aaa"/><use href="#plusG" x="14" y="12.5"/></g>
<!-- add image -->
<g transform="translate(758,63)"><path d="M0.5 0.5h11l4 4v17h-15z" fill="#fff" stroke="#999"/><rect x="1" y="8" width="14" height="10" fill="url(#gLand)" stroke="#333" stroke-width="0.8"/><use href="#plusG" x="13.5" y="13.5"/></g>
<!-- add label -->
<g transform="translate(797,64)"><rect x="0.5" y="0.5" width="18" height="16" fill="#dde6ee" stroke="#999"/><text x="9.5" y="13" font-family="Liberation Serif" font-size="14" text-anchor="middle" fill="#444">T</text><use href="#plusG" x="13" y="12.5"/></g>
<!-- add legend -->
<g transform="translate(835,64)"><rect x="0.5" y="1.5" width="4" height="4" fill="#f0e040" stroke="#999" stroke-width="0.6"/><rect x="0.5" y="8.5" width="4" height="4" fill="#e05555" stroke="#999" stroke-width="0.6"/><rect x="0.5" y="15.5" width="4" height="4" fill="#80c080" stroke="#999" stroke-width="0.6"/><path d="M7 4h5M7 11h5M7 18h5" stroke="#888" stroke-width="1.2"/><use href="#plusG" x="13" y="13"/></g>
<!-- add scalebar -->
<g transform="translate(873,70)"><rect x="0" y="0.5" width="22" height="4" fill="#555"/><path d="M7 2.5h6" stroke="#ddd" stroke-width="1.5"/><use href="#plusG" x="13" y="7"/></g>
<!-- add shape -->
<g transform="translate(910,64)"><rect x="0.5" y="10.5" width="16" height="12" fill="#bcd9f2" stroke="#6a8fb0"/><circle cx="16" cy="11" r="7.5" fill="#f5a8a8" stroke="#d25050" stroke-width="0.8"/><path d="M10 0.5l7 11H3z" fill="#a8e0a0" stroke="#4a9a44" stroke-width="0.8"/><path d="M21 19h6l-3 4z" fill="#222"/></g>
<!-- arrow -->
<g transform="translate(950,64)"><path d="M1 20L20 1" stroke="#444" stroke-width="1.2"/><path d="M20 1l-7 2.5 4.5 4.5z" fill="#fff" stroke="#444"/><path d="M1 20l1.5-3M1 20l3-1.5" stroke="#444"/></g>
<!-- attribute table -->
<g transform="translate(987,65)"><rect x="0.5" y="0.5" width="20" height="19" fill="#fff" stroke="#3d6a8f" stroke-width="1.2"/><path d="M1 3.5h19" stroke="#3d6a8f" stroke-width="2.5"/><path d="M3 7h3M8 7h10M3 10h3M8 10h10M3 13h3M8 13h10M3 16h3M8 16h10" stroke="#3d6a8f" stroke-width="1.2"/></g>
<!-- html -->
<g transform="translate(1025,64)"><rect x="0.5" y="0.5" width="19" height="17" fill="#e2e8ee" stroke="#999"/><text x="10" y="9" font-family="Liberation Mono" font-size="8" text-anchor="middle" fill="#222">&lt;/&gt;</text><circle cx="4" cy="14" r="4" fill="#5b9a5b"/><circle cx="3" cy="13" r="2" fill="#6a8fd0"/><use href="#plusG" x="13" y="13"/></g>
<!-- pressed select/move -->
<rect x="1066" y="57.5" width="34" height="35" fill="url(#gPress)"/>
<line x1="1066.5" y1="57" x2="1066.5" y2="93" stroke="#9a9a9a"/><line x1="1099.5" y1="57" x2="1099.5" y2="93" stroke="#aaa"/>
<g transform="translate(1074,69)"><path d="M0 4.5h11V0l8 6-8 6V7.5H0z" fill="#6d95b8" stroke="#4a6f90" stroke-width="0.8"/></g>
<!-- move item content -->
<g transform="translate(1112,66)"><rect x="0.5" y="0.5" width="17" height="17" fill="#eee" stroke="#999"/><rect x="4.5" y="4.5" width="9" height="9" fill="#a6e0a0" stroke="#4a9a44"/><rect x="10" y="10" width="11" height="11" rx="2" fill="#3f6580"/><path d="M12 15.5h4M14.5 13l2.5 2.5-2.5 2.5" stroke="#fff" stroke-width="1.4" fill="none"/></g>
<!-- select -->
<g transform="translate(1148,65)"><rect x="2.5" y="10.5" width="10" height="8" fill="#c3def2" stroke="#4a6f90"/><circle cx="15" cy="7" r="5.5" fill="#c3def2" stroke="#4a6f90"/><rect x="0" y="0" width="2" height="2" fill="#222"/><rect x="20" y="0" width="2" height="2" fill="#222"/><rect x="0" y="18" width="2" height="2" fill="#222"/><rect x="20" y="18" width="2" height="2" fill="#222"/></g>
<g transform="translate(1186,65)"><rect x="2.5" y="10.5" width="10" height="8" fill="#f4ee9a" stroke="#4a6f90"/><circle cx="15" cy="7" r="5.5" fill="#c3def2" stroke="#4a6f90"/><rect x="7" y="0" width="2" height="2" fill="#222"/><rect x="20" y="0" width="2" height="2" fill="#222"/><rect x="0" y="8" width="2" height="2" fill="#222"/><rect x="20" y="10" width="2" height="2" fill="#222"/><rect x="6" y="12" width="2" height="2" fill="#222"/><rect x="12" y="18" width="2" height="2" fill="#222"/><rect x="0" y="18" width="2" height="2" fill="#222"/></g>
<!-- raise -->
<g transform="translate(1224,64)"><rect x="0.5" y="9.5" width="15" height="12" fill="#c3def2" stroke="#6a8fb0"/><rect x="5.5" y="1.5" width="15" height="13" fill="#f4ee9a" stroke="#aaa050"/><path d="M19 19h6l-3 4z" fill="#222"/></g>
<!-- align -->
<g transform="translate(1263,64)"><path d="M0.5 2v20" stroke="#333"/><rect x="2.5" y="0.5" width="13" height="10" fill="#c3def2" stroke="#6a8fb0"/><rect x="2.5" y="12.5" width="10" height="9" fill="#b0e6b0" stroke="#6aa06a"/><path d="M18 19h6l-3 4z" fill="#222"/></g>
</svg>

<!-- ===== DOCK (page coords) ===== -->
<div id="dk">
  <div class="dh" style="left:1039px;top:93px;width:403px;height:27px;line-height:25px;padding-left:19px">Command history<div class="xbtn" style="left:3px;top:5px"></div></div>
  <div class="a" style="left:1039px;top:120px;width:388px;height:135px;background:#fff;overflow:hidden">
    <div class="li" style="top:0px">Legend updated</div>
    <div class="li" style="top:15px">Legend item removed</div>
    <div class="li" style="top:30px">Legend item edited</div>
    <div class="li" style="top:45px">Legend updated</div>
    <div class="li" style="top:60px">Legend updated</div>
    <div class="li" style="top:75px">Moved legend item up</div>
    <div class="li" style="top:90px">Moved legend item up</div>
    <div class="li" style="top:105px">Change item position</div>
    <div class="a" style="left:1px;top:120px;width:387px;height:15px;background:#3875d7"></div>
    <div class="li" style="top:120px;color:#fff">Change item position</div>
  </div>
  <div class="a" style="left:1427px;top:120px;width:15px;height:135px;background:linear-gradient(90deg,#ededed,#fafafa);border-left:1px solid #e2e2e2"></div>
  <div class="a" style="left:1430px;top:226px;width:8px;height:28px;border-radius:4px;background:#c3c3c3"></div>
  <div class="a" style="left:1039px;top:255px;width:403px;height:2px;background:#b9b9b9"></div>
  <!-- tabs -->
  <div class="a" style="left:1040px;top:268px;width:40px;height:12px;border-top:1px solid #b4b4b4;border-left:1px solid #c4c4c4;border-radius:4px 0 0 0;background:#e6e6e6"></div>
  <div class="a" style="left:1402px;top:268px;width:40px;height:12px;border-top:1px solid #b4b4b4;border-right:1px solid #c4c4c4;border-radius:0 4px 0 0;background:#e6e6e6"></div>
  <div class="a" style="left:1080px;top:258px;width:323px;height:20px;border:1px solid #9a9a9a;border-radius:4px;background:linear-gradient(#ffffff,#f1f1f1 50%,#e9e9e9 51%,#f8f8f8);overflow:hidden;font-size:13px;line-height:18px">
    <div class="a" style="left:0;top:0;width:92px;height:18px;text-align:center">Composition</div>
    <div class="a" style="left:92px;top:0;width:114px;height:18px;text-align:center;color:#fff;background:linear-gradient(#8c8c8c,#8f8f8f 50%,#858585 51%,#9c9c9c);border-left:1px solid #7a7a7a;border-right:1px solid #7a7a7a">Item Properties</div>
    <div class="a" style="left:206px;top:0;width:116px;height:18px;text-align:center">Atlas generation</div>
  </div>
  <div class="dh" style="left:1039px;top:280px;width:403px;height:24px;line-height:23px;border-top:1px solid #d4d4d4;padding-left:19px">Item Properties<div class="xbtn" style="left:3px;top:4px"></div></div>

  <!-- main properties group -->
  <div class="a" style="left:1053px;top:318px;width:0;height:0;border-left:6px solid transparent;border-right:6px solid transparent;border-top:8px solid #3a3a3a"></div>
  <div class="txt" style="left:1073px;top:313px;font-size:13px">Main properties</div>
  <div class="a" style="left:1039px;top:304px;width:403px;height:18px;background:#c7c7c7;border-bottom:1px solid #b0b0b0;font-weight:bold;font-size:13px;line-height:17px;padding-left:5px">Legend</div>
  <div class="a" style="left:1051px;top:333px;width:364px;height:98px;border:1px solid #c9c9c9;border-radius:5px;background:#e5e5e5"></div>
  <div class="txt" style="left:1063px;top:347px;font-size:13px">Title</div>
  <div class="a" style="left:1143px;top:345px;width:260px;height:21px;background:#fff;border:1px solid #a7a7a7;box-shadow:inset 0 1px 0 #dcdcdc"></div>
  <div class="txt" style="left:1146px;top:348px;font-size:13px">Legend</div>
  <div class="txt" style="left:1063px;top:374px;font-size:13px">Map</div>
  <div class="a" style="left:1142px;top:373px;width:261px;height:21px;border:1px solid #9a9a9a;border-radius:4px;background:linear-gradient(#fefefe,#f3f3f3 50%,#e8e8e8 51%,#f6f6f6)"></div>
  <div class="txt" style="left:1151px;top:374px;font-size:13px">Map 0</div>
  <div class="a" style="left:1390px;top:377px;width:0;height:0;border-left:3px solid transparent;border-right:3px solid transparent;border-bottom:4px solid #444"></div>
  <div class="a" style="left:1390px;top:384px;width:0;height:0;border-left:3px solid transparent;border-right:3px solid transparent;border-top:4px solid #444"></div>
  <div class="txt" style="left:1063px;top:401px;font-size:13px">Wrap text on</div>
  <div class="a" style="left:1143px;top:398px;width:260px;height:21px;background:#fff;border:1px solid #a7a7a7;box-shadow:inset 0 1px 0 #dcdcdc"></div>
  <!-- legend items -->
  <div class="a" style="left:1053px;top:454px;width:0;height:0;border-left:6px solid transparent;border-right:6px solid transparent;border-top:8px solid #3a3a3a"></div>
  <div class="txt" style="left:1073px;top:449px;font-size:13px">Legend items</div>
  <div class="a" style="left:1051px;top:468px;width:364px;height:298px;border:1px solid #c9c9c9;border-radius:5px;background:#e5e5e5"></div>
  <div class="btn" style="left:1063px;top:480px;width:88px;height:23px;line-height:21px;border-radius:1px;border-color:#a2a2a2">Update item</div>
  <div class="btn" style="left:1157px;top:480px;width:77px;height:23px;line-height:21px;border-radius:1px;border-color:#a2a2a2">Update all</div>
  <div class="a" style="left:1063px;top:509px;width:340px;height:192px;background:#fff;border:1px solid #a9a9a9"></div>
  <div class="a" style="left:1064px;top:510px;width:338px;height:17px;background:linear-gradient(#fdfdfd,#f1f1f1 50%,#e8e8e8 51%,#f4f4f4);border-bottom:1px solid #bdbdbd"></div>
  <div class="a" style="left:1250px;top:512px;width:1px;height:13px;background:#bcbcbc"></div>
  <div class="txt" style="left:1068px;top:511px;font-size:13px;line-height:13px">1</div>
  <div class="txt" style="left:1256px;top:511px;font-size:13px;line-height:13px">2</div>
  <div class="a" style="left:1071px;top:528px;width:0;height:0;border-top:5px solid transparent;border-bottom:5px solid transparent;border-left:8px solid #8a8a8a"></div>
<div class="txt" style="left:1089px;top:526px;font-size:13px;line-height:13px">Places</div>
<div class="txt" style="left:1256px;top:526px;font-size:13px;line-height:13px">Hidden</div>
<div class="a" style="left:1071px;top:541px;width:0;height:0;border-top:5px solid transparent;border-bottom:5px solid transparent;border-left:8px solid #8a8a8a"></div>
<div class="txt" style="left:1089px;top:539px;font-size:13px;line-height:13px">Roads and Streets</div>
<div class="txt" style="left:1256px;top:539px;font-size:13px;line-height:13px">Hidden</div>
<div class="a" style="left:1071px;top:554px;width:0;height:0;border-top:5px solid transparent;border-bottom:5px solid transparent;border-left:8px solid #8a8a8a"></div>
<div class="txt" style="left:1089px;top:552px;font-size:13px;line-height:13px">Surface Water</div>
<div class="txt" style="left:1256px;top:552px;font-size:13px;line-height:13px">Hidden</div>
<div class="a" style="left:1071px;top:567px;width:0;height:0;border-top:5px solid transparent;border-bottom:5px solid transparent;border-left:8px solid #8a8a8a"></div>
<div class="txt" style="left:1089px;top:565px;font-size:13px;line-height:13px">Rivers</div>
<div class="txt" style="left:1256px;top:565px;font-size:13px;line-height:13px">Hidden</div>
<div class="a" style="left:1069px;top:581px;width:0;height:0;border-left:5px solid transparent;border-right:5px solid transparent;border-top:8px solid #8a8a8a"></div>
<div class="txt" style="left:1089px;top:578px;font-size:13px;line-height:13px">landuse</div>
<div class="txt" style="left:1256px;top:578px;font-size:13px;line-height:13px">Hidden</div>
<div class="a" style="left:1064px;top:608px;width:186px;height:16px;background:#3875d7"></div>
<div class="a" style="left:1109px;top:592px;width:16px;height:16px;background:#dff2cf"></div>
<div class="txt" style="left:1135px;top:593px;font-size:13px;line-height:14px;color:#000">Rural, small</div>
<div class="a" style="left:1109px;top:608px;width:16px;height:16px;background:#8bb37f"></div>
<div class="txt" style="left:1135px;top:609px;font-size:13px;line-height:14px;color:#fff">Rural, large</div>
<div class="a" style="left:1109px;top:624px;width:16px;height:16px;background:#8dbab0"></div>
<div class="txt" style="left:1135px;top:625px;font-size:13px;line-height:14px;color:#000">Swellendam</div>
<div class="a" style="left:1109px;top:640px;width:16px;height:16px;background:#e2edf2"></div>
<div class="txt" style="left:1135px;top:641px;font-size:13px;line-height:14px;color:#000">Residential</div>

  <!-- tool buttons -->
  <div class="btn" style="left:1063px;top:707px;width:30px;height:30px;border-radius:1px;border-color:#b0b0b0;background:linear-gradient(#fbfbfb,#ececec)"></div>
<div class="btn" style="left:1096px;top:707px;width:30px;height:30px;border-radius:1px;border-color:#b0b0b0;background:linear-gradient(#fbfbfb,#ececec)"></div>
<div class="btn" style="left:1129px;top:709px;width:26px;height:26px;border-radius:1px;border-color:#b0b0b0;background:linear-gradient(#fbfbfb,#ececec)"></div>
<div class="btn" style="left:1158px;top:707px;width:30px;height:30px;border-radius:1px;border-color:#b0b0b0;background:linear-gradient(#fbfbfb,#ececec)"></div>
<div class="btn" style="left:1191px;top:707px;width:30px;height:30px;border-radius:1px;border-color:#b0b0b0;background:linear-gradient(#fbfbfb,#ececec)"></div>
<div class="btn" style="left:1224px;top:707px;width:30px;height:30px;border-radius:1px;border-color:#b0b0b0;background:linear-gradient(#fbfbfb,#ececec)"></div>
<div class="btn" style="left:1257px;top:707px;width:30px;height:30px;border-radius:1px;border-color:#b0b0b0;background:linear-gradient(#fbfbfb,#ececec)"></div>

  <div class="a" style="left:1063px;top:742px;width:14px;height:14px;border:1px solid #7c7c7c;border-radius:2px;background:linear-gradient(#f4f4f4,#d6d6d6)"></div>
  <svg class="a" style="left:1063px;top:737px" width="18" height="18"><path d="M3.5 10 L7 14.5 L15 2.5" fill="none" stroke="#1a1a1a" stroke-width="2.4"/></svg>
  <div class="txt" style="left:1081px;top:740px;font-size:13px">Auto Update</div>
<svg class="a" style="left:1063px;top:707px" width="230" height="30" viewBox="1063 707 230 30">
<defs>
<linearGradient id="gTri" x1="0" y1="0" x2="0" y2="1"><stop offset="0" stop-color="#8fd0ff"/><stop offset="0.5" stop-color="#2f8ff0"/><stop offset="1" stop-color="#0b5fd0"/></linearGradient>
</defs>
<path d="M1068.5 717.5h19c1.5 0 2 1 1 2l-9 8.5c-.8.8-1.7.8-2.5 0l-9-8.5c-1-1-.5-2 .5-2z" fill="url(#gTri)" stroke="#0b4fb0" stroke-width="0.8"/>
<path d="M1101.5 727h19c1.5 0 2-1 1-2l-9-8.5c-.8-.8-1.7-.8-2.5 0l-9 8.5c-1 1-.5 2 .5 2z" fill="url(#gTri)" stroke="#0b4fb0" stroke-width="0.8"/>
<g opacity="0.55"><path d="M1134.5 716.5h9v13h-9z" fill="#e8e8e8" stroke="#777"/><path d="M1137 715v4h4v-4" fill="none" stroke="#777"/><circle cx="1145" cy="727" r="3.5" fill="#4a9a4a"/><path d="M1145 725v4M1143 727h4" stroke="#fff" stroke-width="1.2"/></g>
<path d="M1169 713h6v6h6v6h-6v6h-6v-6h-6v-6h6z" fill="#2da02d" stroke="#136a13" stroke-width="1"/>
<path d="M1170.5 715h3v5.5h5.5v3h-5.5v5.5h-3v-5.5h-5.5v-3h5.5z" fill="#5ccc4c" opacity="0.7"/>
<rect x="1197" y="717" width="18" height="9" rx="2.5" fill="#c81818" stroke="#7a0a0a" stroke-width="1"/>
<rect x="1199" y="718.5" width="14" height="3" rx="1" fill="#f06060" opacity="0.6"/>
<path d="M1230 715h12v15h-12z" fill="#f4f4f4" stroke="#9a9a9a" stroke-width="0.8"/>
<path d="M1233 729l2-6 8-10 2.5 2-8 10z" fill="#f2b530" stroke="#b07010" stroke-width="0.6"/>
<ellipse cx="1246" cy="727" rx="2.5" ry="1.5" fill="#ccc"/>
<text x="1270" y="730" font-family="Liberation Sans" font-size="19" text-anchor="middle" fill="#c9a0cf">&#931;</text>
</svg>

  <div class="a" style="left:1055px;top:786px;width:0;height:0;border-top:6px solid transparent;border-bottom:6px solid transparent;border-left:8px solid #3a3a3a"></div>
  <div class="txt" style="left:1073px;top:784px;font-size:13px">Fonts</div>
  <div class="a" style="left:1055px;top:813px;width:0;height:0;border-top:6px solid transparent;border-bottom:6px solid transparent;border-left:8px solid #3a3a3a"></div>
  <div class="txt" style="left:1073px;top:811px;font-size:13px">Columns</div>

  <div class="a" style="left:1427px;top:322px;width:15px;height:510px;background:linear-gradient(90deg,#ededed,#fcfcfc);border-left:1px solid #e0e0e0"></div>
  <div class="a" style="left:1430px;top:335px;width:8px;height:322px;border-radius:4px;background:#c3c3c3"></div>
<svg class="a" style="left:1428px;top:818px" width="14" height="14"><path d="M3 13L13 3M7 13L13 7M11 13L13 11" stroke="#555" stroke-width="1" stroke-dasharray="1 1"/></svg>
</div>
</body></html>
